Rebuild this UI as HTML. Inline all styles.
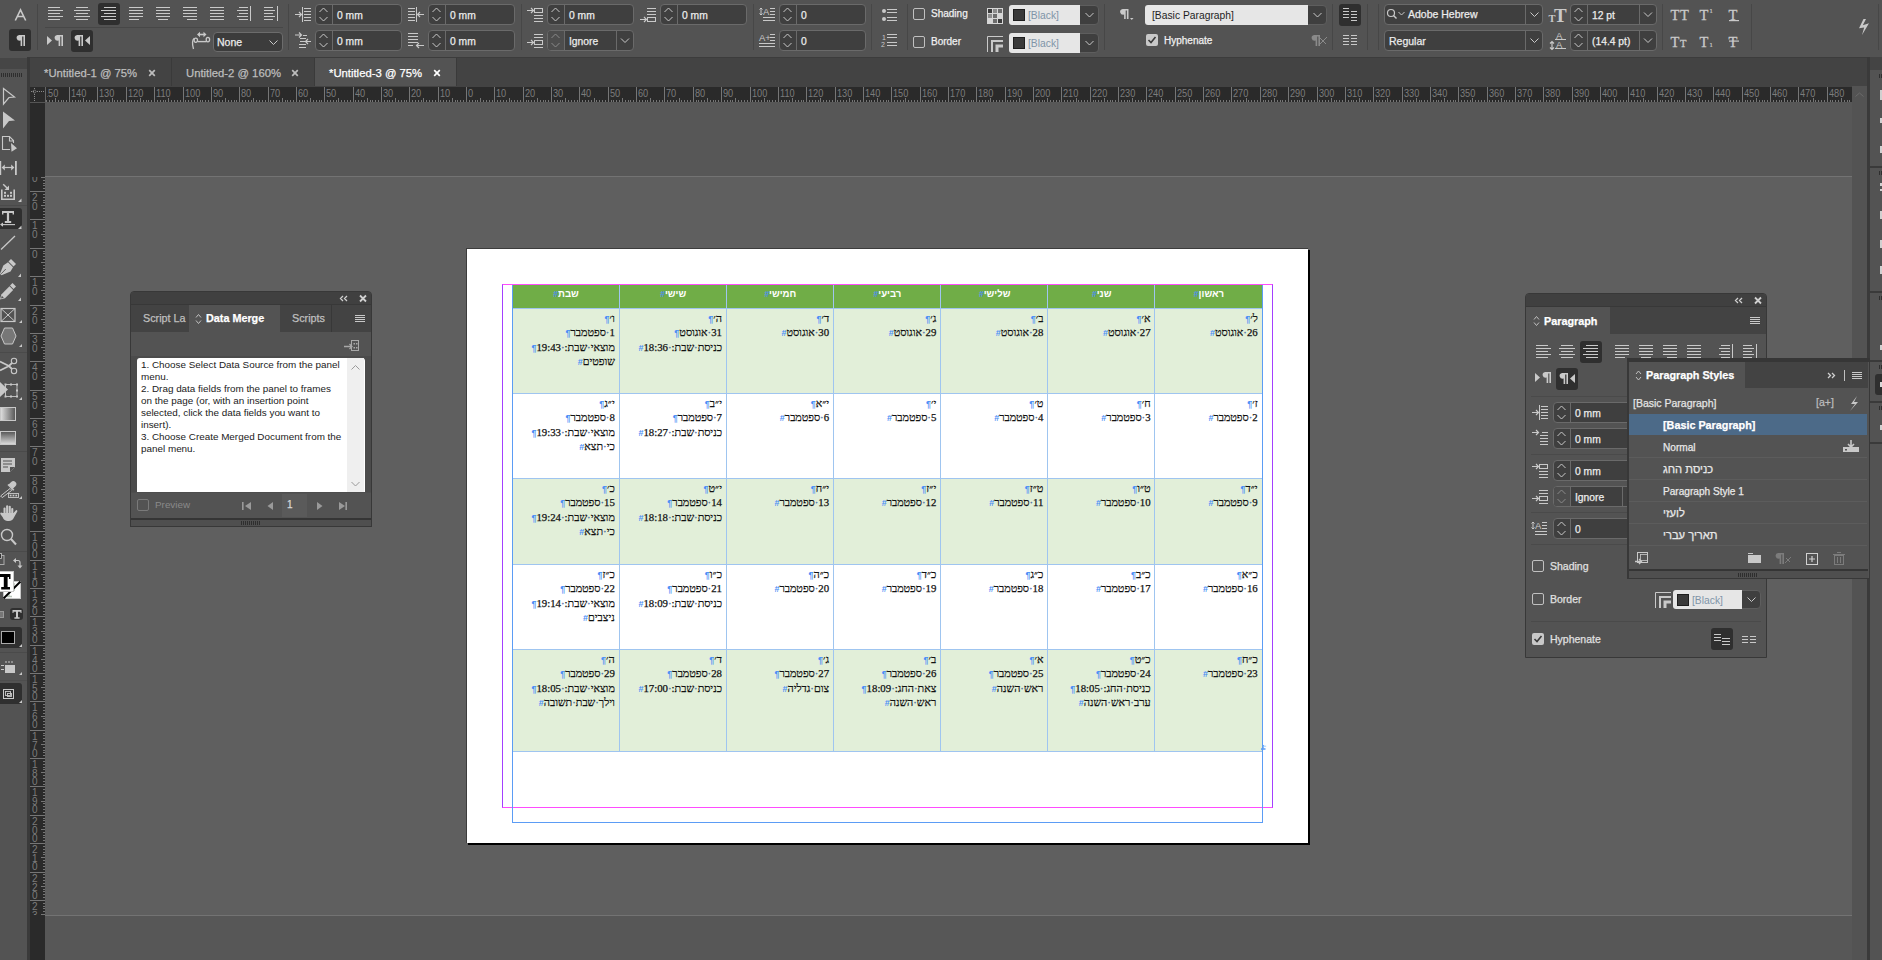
<!DOCTYPE html><html><head><meta charset="utf-8"><title>InDesign</title><style>
*{margin:0;padding:0;box-sizing:border-box}
html,body{width:1882px;height:960px;overflow:hidden;background:#535353;font-family:"Liberation Sans",sans-serif}
div{position:absolute}
.t{white-space:nowrap;-webkit-text-stroke-width:0.25px}
.r{white-space:nowrap}
svg{overflow:visible}
</style></head><body>
<div style="left:0px;top:0px;width:1882px;height:57px;background:#535353"></div>
<div style="left:0px;top:57px;width:1882px;height:1px;background:#3c3c3c"></div>
<svg style="position:absolute;left:0px;top:0px;" width="1" height="1" viewBox="0 0 1 1"><path d="M15.3,20.5 L20.5,9.8 L25.7,20.5 M17.5,16.5 h6" fill="none" stroke="#c9c9c9" stroke-width="1.6"/></svg>
<div style="left:9px;top:29px;width:22px;height:22px;background:#2f2f2f;border-radius:3px"></div>
<svg style="position:absolute;left:0px;top:0px;" width="1" height="1" viewBox="0 0 1 1"><path d="M19.2,35 h5.8 v11.0 h-1.6 v-9.6 h-1.2 v9.6 h-1.6 v-5.4 a3.2,2.8 0 0 1 -1.4,-5.6 z" fill="#c9c9c9"/></svg>
<div style="left:37px;top:4px;width:1px;height:46px;background:#474747"></div>
<div style="left:98px;top:3px;width:22px;height:22px;background:#2f2f2f;border-radius:3px"></div>
<svg style="position:absolute;left:0px;top:0px;" width="1" height="1" viewBox="0 0 1 1"><rect x="48" y="7" width="12" height="1" fill="#c9c9c9"/><rect x="48" y="10" width="15" height="1" fill="#c9c9c9"/><rect x="48" y="13" width="12" height="1" fill="#c9c9c9"/><rect x="48" y="16" width="15" height="1" fill="#c9c9c9"/><rect x="48" y="19" width="12" height="1" fill="#c9c9c9"/><rect x="76" y="7" width="12" height="1" fill="#c9c9c9"/><rect x="74" y="10" width="16" height="1" fill="#c9c9c9"/><rect x="76" y="13" width="12" height="1" fill="#c9c9c9"/><rect x="74" y="16" width="16" height="1" fill="#c9c9c9"/><rect x="76" y="19" width="12" height="1" fill="#c9c9c9"/><rect x="104" y="7" width="12" height="1" fill="#c9c9c9"/><rect x="101" y="10" width="15" height="1" fill="#c9c9c9"/><rect x="104" y="13" width="12" height="1" fill="#c9c9c9"/><rect x="101" y="16" width="15" height="1" fill="#c9c9c9"/><rect x="104" y="19" width="12" height="1" fill="#c9c9c9"/><rect x="129" y="7" width="14" height="1" fill="#c9c9c9"/><rect x="129" y="10" width="14" height="1" fill="#c9c9c9"/><rect x="129" y="13" width="14" height="1" fill="#c9c9c9"/><rect x="129" y="16" width="14" height="1" fill="#c9c9c9"/><rect x="129" y="19" width="10" height="1" fill="#c9c9c9"/><rect x="156" y="7" width="14" height="1" fill="#c9c9c9"/><rect x="156" y="10" width="14" height="1" fill="#c9c9c9"/><rect x="156" y="13" width="14" height="1" fill="#c9c9c9"/><rect x="156" y="16" width="14" height="1" fill="#c9c9c9"/><rect x="158" y="19" width="10" height="1" fill="#c9c9c9"/><rect x="183" y="7" width="14" height="1" fill="#c9c9c9"/><rect x="183" y="10" width="14" height="1" fill="#c9c9c9"/><rect x="183" y="13" width="14" height="1" fill="#c9c9c9"/><rect x="183" y="16" width="14" height="1" fill="#c9c9c9"/><rect x="187" y="19" width="10" height="1" fill="#c9c9c9"/><rect x="210" y="7" width="14" height="1" fill="#c9c9c9"/><rect x="210" y="10" width="14" height="1" fill="#c9c9c9"/><rect x="210" y="13" width="14" height="1" fill="#c9c9c9"/><rect x="210" y="16" width="14" height="1" fill="#c9c9c9"/><rect x="210" y="19" width="14" height="1" fill="#c9c9c9"/><rect x="239" y="7" width="9" height="1" fill="#c9c9c9"/><rect x="237" y="10" width="11" height="1" fill="#c9c9c9"/><rect x="239" y="13" width="9" height="1" fill="#c9c9c9"/><rect x="237" y="16" width="11" height="1" fill="#c9c9c9"/><rect x="239" y="19" width="9" height="1" fill="#c9c9c9"/><rect x="250" y="6" width="1" height="15" fill="#c9c9c9"/><rect x="264" y="7" width="9" height="1" fill="#c9c9c9"/><rect x="264" y="10" width="11" height="1" fill="#c9c9c9"/><rect x="264" y="13" width="9" height="1" fill="#c9c9c9"/><rect x="264" y="16" width="11" height="1" fill="#c9c9c9"/><rect x="264" y="19" width="9" height="1" fill="#c9c9c9"/><rect x="277" y="6" width="1" height="15" fill="#c9c9c9"/></svg>
<div style="left:45px;top:27px;width:238px;height:1px;background:#474747"></div>
<svg style="position:absolute;left:0px;top:0px;" width="1" height="1" viewBox="0 0 1 1"><path d="M47,36 L52,40.5 L47,45 z" fill="#c9c9c9"/><path d="M57.2,35 h5.8 v11.0 h-1.6 v-9.6 h-1.2 v9.6 h-1.6 v-5.4 a3.2,2.8 0 0 1 -1.4,-5.6 z" fill="#c9c9c9"/></svg>
<div style="left:71px;top:30px;width:22px;height:22px;background:#2f2f2f;border-radius:3px"></div>
<svg style="position:absolute;left:0px;top:0px;" width="1" height="1" viewBox="0 0 1 1"><path d="M77.2,35 h5.8 v11.0 h-1.6 v-9.6 h-1.2 v9.6 h-1.6 v-5.4 a3.2,2.8 0 0 1 -1.4,-5.6 z" fill="#c9c9c9"/><path d="M90,36 L85,40.5 L90,45 z" fill="#c9c9c9"/></svg>
<svg style="position:absolute;left:0px;top:0px;" width="1" height="1" viewBox="0 0 1 1"><path d="M198.5,34.5 H204.5" stroke="#c9c9c9" stroke-width="1.6"/><path d="M197,34.5 L200,31.8 L200,37.2 z M206.5,34.5 L203.5,31.8 L203.5,37.2 z" fill="#c9c9c9"/><ellipse cx="207.9" cy="39.6" rx="1.7" ry="2.2" fill="none" stroke="#c9c9c9" stroke-width="1.3"/><path d="M206.5,41.6 H198" stroke="#c9c9c9" stroke-width="1.4"/><ellipse cx="195.8" cy="40.2" rx="1.7" ry="2.1" fill="none" stroke="#c9c9c9" stroke-width="1.3"/><path d="M194.3,38.3 C192.2,40 192.2,44.5 193.5,49" stroke="#c9c9c9" stroke-width="1.3" fill="none"/></svg>
<div style="left:213px;top:32px;width:70px;height:20px;background:#3c3c3c;border:1px solid #6c6c6c;border-radius:4px"></div>
<div class="t" style="left:217px;top:35px;font-size:10.5px;line-height:15px;color:#ececec;">None</div>
<svg style="position:absolute;left:0px;top:0px;" width="1" height="1" viewBox="0 0 1 1"><polyline points="269.5,40.5 273.5,44.5 277.5,40.5" fill="none" stroke="#c9c9c9" stroke-width="1"/></svg>
<div style="left:288px;top:4px;width:1px;height:46px;background:#474747"></div>
<svg style="position:absolute;left:0px;top:0px;" width="1" height="1" viewBox="0 0 1 1"><path d="M295,14.5 h6 M299,12 l2.5,2.5 l-2.5,2.5" stroke="#c9c9c9" stroke-width="1.2" fill="none"/><rect x="302" y="7" width="1" height="15" fill="#c9c9c9"/><rect x="304" y="8" width="7" height="1" fill="#c9c9c9"/><rect x="304" y="11" width="7" height="1" fill="#c9c9c9"/><rect x="304" y="14" width="7" height="1" fill="#c9c9c9"/><rect x="304" y="17" width="7" height="1" fill="#c9c9c9"/><rect x="304" y="20" width="7" height="1" fill="#c9c9c9"/><rect x="408" y="8" width="7" height="1" fill="#c9c9c9"/><rect x="408" y="11" width="7" height="1" fill="#c9c9c9"/><rect x="408" y="14" width="7" height="1" fill="#c9c9c9"/><rect x="408" y="17" width="7" height="1" fill="#c9c9c9"/><rect x="408" y="20" width="7" height="1" fill="#c9c9c9"/><rect x="416" y="7" width="1" height="15" fill="#c9c9c9"/><path d="M424,14.5 h-6 M420,12 l-2.5,2.5 l2.5,2.5" stroke="#c9c9c9" stroke-width="1.2" fill="none"/><path d="M295,35 h6 M299,32.5 l2.5,2.5 l-2.5,2.5" stroke="#c9c9c9" stroke-width="1.2" fill="none"/><rect x="303" y="35" width="4" height="1" fill="#c9c9c9"/><rect x="300" y="38" width="6" height="1" fill="#c9c9c9"/><rect x="300" y="41" width="5" height="1" fill="#c9c9c9"/><rect x="299" y="44" width="7" height="1" fill="#c9c9c9"/><rect x="299" y="47" width="7" height="1" fill="#c9c9c9"/><path d="M311,41.5 h-5 M308,39 l-2.5,2.5 l2.5,2.5" stroke="#c9c9c9" stroke-width="1.2" fill="none"/><rect x="408" y="33" width="10" height="1" fill="#c9c9c9"/><rect x="408" y="36" width="10" height="1" fill="#c9c9c9"/><rect x="408" y="39" width="10" height="1" fill="#c9c9c9"/><rect x="408" y="42" width="10" height="1" fill="#c9c9c9"/><rect x="408" y="45" width="5" height="1" fill="#c9c9c9"/><path d="M424,45.5 h-7 M419,43 l-2.5,2.5 l2.5,2.5" stroke="#c9c9c9" stroke-width="1.2" fill="none"/><path d="M527,10.5 h6 M531,8 l2.5,2.5 l-2.5,2.5" stroke="#c9c9c9" stroke-width="1.2" fill="none"/><rect x="534.5" y="8.5" width="8" height="4" fill="none" stroke="#c9c9c9"/><rect x="534" y="15" width="9" height="1" fill="#c9c9c9"/><rect x="534" y="18" width="9" height="1" fill="#c9c9c9"/><rect x="534" y="21" width="9" height="1" fill="#c9c9c9"/><rect x="647" y="8" width="9" height="1" fill="#c9c9c9"/><rect x="647" y="11" width="9" height="1" fill="#c9c9c9"/><rect x="647" y="14" width="9" height="1" fill="#c9c9c9"/><path d="M640,19.5 h6 M644,17 l2.5,2.5 l-2.5,2.5" stroke="#c9c9c9" stroke-width="1.2" fill="none"/><rect x="647.5" y="17.5" width="8" height="4" fill="none" stroke="#c9c9c9"/><rect x="534" y="34" width="9" height="1" fill="#c9c9c9"/><rect x="534" y="37" width="9" height="1" fill="#c9c9c9"/><path d="M527,42.5 h6 M531,40 l2.5,2.5 l-2.5,2.5" stroke="#c9c9c9" stroke-width="1.2" fill="none"/><rect x="534.5" y="40.5" width="8" height="4" fill="none" stroke="#c9c9c9"/><rect x="534" y="47" width="9" height="1" fill="#c9c9c9"/></svg>
<div style="left:315px;top:4px;width:87px;height:21px;background:#3f3f3f;border:1px solid #6a6a6a;border-radius:4px"></div>
<div style="left:332px;top:5px;width:1px;height:19px;background:#6a6a6a"></div>
<svg style="position:absolute;left:0px;top:0px;" width="1" height="1" viewBox="0 0 1 1"><polyline points="319.5,12.0 323.5,8.0 327.5,12.0" fill="none" stroke="#c9c9c9" stroke-width="1"/><polyline points="319.5,17.0 323.5,21.0 327.5,17.0" fill="none" stroke="#c9c9c9" stroke-width="1"/></svg>
<div class="t" style="left:337px;top:8px;font-size:10.3px;line-height:15px;color:#ececec;">0 mm</div>
<div style="left:428px;top:4px;width:87px;height:21px;background:#3f3f3f;border:1px solid #6a6a6a;border-radius:4px"></div>
<div style="left:445px;top:5px;width:1px;height:19px;background:#6a6a6a"></div>
<svg style="position:absolute;left:0px;top:0px;" width="1" height="1" viewBox="0 0 1 1"><polyline points="432.5,12.0 436.5,8.0 440.5,12.0" fill="none" stroke="#c9c9c9" stroke-width="1"/><polyline points="432.5,17.0 436.5,21.0 440.5,17.0" fill="none" stroke="#c9c9c9" stroke-width="1"/></svg>
<div class="t" style="left:450px;top:8px;font-size:10.3px;line-height:15px;color:#ececec;">0 mm</div>
<div style="left:315px;top:30px;width:87px;height:21px;background:#3f3f3f;border:1px solid #6a6a6a;border-radius:4px"></div>
<div style="left:332px;top:31px;width:1px;height:19px;background:#6a6a6a"></div>
<svg style="position:absolute;left:0px;top:0px;" width="1" height="1" viewBox="0 0 1 1"><polyline points="319.5,38.0 323.5,34.0 327.5,38.0" fill="none" stroke="#c9c9c9" stroke-width="1"/><polyline points="319.5,43.0 323.5,47.0 327.5,43.0" fill="none" stroke="#c9c9c9" stroke-width="1"/></svg>
<div class="t" style="left:337px;top:34px;font-size:10.3px;line-height:15px;color:#ececec;">0 mm</div>
<div style="left:428px;top:30px;width:87px;height:21px;background:#3f3f3f;border:1px solid #6a6a6a;border-radius:4px"></div>
<div style="left:445px;top:31px;width:1px;height:19px;background:#6a6a6a"></div>
<svg style="position:absolute;left:0px;top:0px;" width="1" height="1" viewBox="0 0 1 1"><polyline points="432.5,38.0 436.5,34.0 440.5,38.0" fill="none" stroke="#c9c9c9" stroke-width="1"/><polyline points="432.5,43.0 436.5,47.0 440.5,43.0" fill="none" stroke="#c9c9c9" stroke-width="1"/></svg>
<div class="t" style="left:450px;top:34px;font-size:10.3px;line-height:15px;color:#ececec;">0 mm</div>
<div style="left:521px;top:4px;width:1px;height:46px;background:#474747"></div>
<div style="left:547px;top:4px;width:87px;height:21px;background:#3f3f3f;border:1px solid #6a6a6a;border-radius:4px"></div>
<div style="left:564px;top:5px;width:1px;height:19px;background:#6a6a6a"></div>
<svg style="position:absolute;left:0px;top:0px;" width="1" height="1" viewBox="0 0 1 1"><polyline points="551.5,12.0 555.5,8.0 559.5,12.0" fill="none" stroke="#c9c9c9" stroke-width="1"/><polyline points="551.5,17.0 555.5,21.0 559.5,17.0" fill="none" stroke="#c9c9c9" stroke-width="1"/></svg>
<div class="t" style="left:569px;top:8px;font-size:10.3px;line-height:15px;color:#ececec;">0 mm</div>
<div style="left:660px;top:4px;width:87px;height:21px;background:#3f3f3f;border:1px solid #6a6a6a;border-radius:4px"></div>
<div style="left:677px;top:5px;width:1px;height:19px;background:#6a6a6a"></div>
<svg style="position:absolute;left:0px;top:0px;" width="1" height="1" viewBox="0 0 1 1"><polyline points="664.5,12.0 668.5,8.0 672.5,12.0" fill="none" stroke="#c9c9c9" stroke-width="1"/><polyline points="664.5,17.0 668.5,21.0 672.5,17.0" fill="none" stroke="#c9c9c9" stroke-width="1"/></svg>
<div class="t" style="left:682px;top:8px;font-size:10.3px;line-height:15px;color:#ececec;">0 mm</div>
<div style="left:547px;top:30px;width:87px;height:21px;background:#3f3f3f;border:1px solid #6a6a6a;border-radius:4px"></div>
<div style="left:548px;top:31px;width:16px;height:19px;background:#4d4d4d;border-radius:3px 0 0 3px"></div>
<div style="left:564px;top:31px;width:1px;height:19px;background:#6a6a6a"></div>
<div style="left:616px;top:31px;width:1px;height:19px;background:#6a6a6a"></div>
<svg style="position:absolute;left:0px;top:0px;" width="1" height="1" viewBox="0 0 1 1"><polyline points="551.5,38.0 555.5,34.0 559.5,38.0" fill="none" stroke="#8a8a8a" stroke-width="1"/><polyline points="551.5,43.0 555.5,47.0 559.5,43.0" fill="none" stroke="#8a8a8a" stroke-width="1"/><polyline points="621.0,38.5 625.0,42.5 629.0,38.5" fill="none" stroke="#c9c9c9" stroke-width="1"/></svg>
<div class="t" style="left:569px;top:34px;font-size:10.3px;line-height:15px;color:#ececec;">Ignore</div>
<div style="left:753px;top:4px;width:1px;height:46px;background:#474747"></div>
<svg style="position:absolute;left:0px;top:0px;" width="1" height="1" viewBox="0 0 1 1"><path d="M761,8 v7 M759.5,9.5 l1.5,-1.5 l1.5,1.5 M759.5,13.5 l1.5,1.5 l1.5,-1.5" stroke="#c9c9c9" stroke-width="1" fill="none"/><text x="763" y="15" font-family="Liberation Sans" font-size="9.5" fill="#c9c9c9">A</text><rect x="770" y="8" width="5" height="1" fill="#c9c9c9"/><rect x="770" y="11" width="5" height="1" fill="#c9c9c9"/><rect x="770" y="14" width="5" height="1" fill="#c9c9c9"/><rect x="763" y="17" width="12" height="1" fill="#c9c9c9"/><rect x="763" y="20" width="12" height="1" fill="#c9c9c9"/><text x="759" y="41" font-family="Liberation Sans" font-size="9.5" fill="#c9c9c9">A+</text><rect x="770" y="34" width="5" height="1" fill="#c9c9c9"/><rect x="770" y="37" width="5" height="1" fill="#c9c9c9"/><rect x="770" y="40" width="5" height="1" fill="#c9c9c9"/><rect x="759" y="43" width="16" height="1" fill="#c9c9c9"/><rect x="759" y="46" width="16" height="1" fill="#c9c9c9"/><circle cx="884" cy="11" r="2" fill="#c9c9c9"/><circle cx="884" cy="19" r="2" fill="#c9c9c9"/><rect x="887" y="9" width="10" height="1" fill="#c9c9c9"/><rect x="887" y="12" width="10" height="1" fill="#c9c9c9"/><rect x="887" y="17" width="10" height="1" fill="#c9c9c9"/><rect x="887" y="20" width="10" height="1" fill="#c9c9c9"/><text x="882" y="40" font-family="Liberation Sans" font-size="7" fill="#c9c9c9">1</text><text x="881" y="47" font-family="Liberation Sans" font-size="7" fill="#c9c9c9">2</text><rect x="887" y="34" width="10" height="1" fill="#c9c9c9"/><rect x="887" y="37" width="10" height="1" fill="#c9c9c9"/><rect x="887" y="42" width="10" height="1" fill="#c9c9c9"/><rect x="887" y="45" width="10" height="1" fill="#c9c9c9"/></svg>
<div style="left:779px;top:4px;width:87px;height:21px;background:#3f3f3f;border:1px solid #6a6a6a;border-radius:4px"></div>
<div style="left:796px;top:5px;width:1px;height:19px;background:#6a6a6a"></div>
<svg style="position:absolute;left:0px;top:0px;" width="1" height="1" viewBox="0 0 1 1"><polyline points="783.5,12.0 787.5,8.0 791.5,12.0" fill="none" stroke="#c9c9c9" stroke-width="1"/><polyline points="783.5,17.0 787.5,21.0 791.5,17.0" fill="none" stroke="#c9c9c9" stroke-width="1"/></svg>
<div class="t" style="left:801px;top:8px;font-size:10.3px;line-height:15px;color:#ececec;">0</div>
<div style="left:779px;top:30px;width:87px;height:21px;background:#3f3f3f;border:1px solid #6a6a6a;border-radius:4px"></div>
<div style="left:796px;top:31px;width:1px;height:19px;background:#6a6a6a"></div>
<svg style="position:absolute;left:0px;top:0px;" width="1" height="1" viewBox="0 0 1 1"><polyline points="783.5,38.0 787.5,34.0 791.5,38.0" fill="none" stroke="#c9c9c9" stroke-width="1"/><polyline points="783.5,43.0 787.5,47.0 791.5,43.0" fill="none" stroke="#c9c9c9" stroke-width="1"/></svg>
<div class="t" style="left:801px;top:34px;font-size:10.3px;line-height:15px;color:#ececec;">0</div>
<div style="left:871px;top:4px;width:1px;height:46px;background:#474747"></div>
<div style="left:907px;top:4px;width:1px;height:46px;background:#474747"></div>
<div style="left:913px;top:8px;width:12px;height:12px;border:1px solid #c0c0c0;border-radius:2px"></div>
<div class="t" style="left:931px;top:6px;font-size:10px;line-height:16px;color:#f0f0f0;">Shading</div>
<div style="left:913px;top:36px;width:12px;height:12px;border:1px solid #c0c0c0;border-radius:2px"></div>
<div class="t" style="left:931px;top:34px;font-size:10px;line-height:16px;color:#f0f0f0;">Border</div>
<svg style="position:absolute;left:0px;top:0px;" width="1" height="1" viewBox="0 0 1 1"><rect x="987" y="8" width="16" height="16" fill="#d6d6d6"/><rect x="988" y="9" width="4" height="4" fill="#3c3c3c"/><rect x="993" y="9" width="4" height="4" fill="#8c8c8c"/><rect x="998" y="9" width="4" height="4" fill="#6c6c6c"/><rect x="988" y="14" width="4" height="4" fill="#8c8c8c"/><rect x="993" y="14" width="4" height="4" fill="#6c6c6c"/><rect x="998" y="14" width="4" height="4" fill="#d6d6d6"/><rect x="988" y="19" width="4" height="4" fill="#d6d6d6"/><rect x="993" y="19" width="4" height="4" fill="#6c6c6c"/><rect x="998" y="19" width="4" height="4" fill="#3c3c3c"/><path d="M987.5,52 V36.5 H1003" stroke="#c9c9c9" stroke-width="1" fill="none"/><path d="M992,52 V41 H1003" stroke="#c9c9c9" stroke-width="2" fill="none"/><path d="M997,52 V46 H1003" stroke="#c9c9c9" stroke-width="3" fill="none"/></svg>
<div style="left:1009px;top:5px;width:90px;height:20px;background:#3f3f3f;border:1px solid #5e5e5e;border-radius:4px"></div>
<div style="left:1009px;top:5px;width:71px;height:20px;background:#e6e6e6;border-radius:3px 0 0 3px"></div>
<svg style="position:absolute;left:0px;top:0px;" width="1" height="1" viewBox="0 0 1 1"><polyline points="1085.5,13.0 1089.5,17.0 1093.5,13.0" fill="none" stroke="#c9c9c9" stroke-width="1"/></svg>
<div style="left:1013px;top:9px;width:12px;height:12px;background:#3a3a3a;border:1px solid #1e1e1e"></div>
<div class="r" style="left:1028px;top:8px;font-size:10.3px;line-height:15px;color:#7f94a8;">[Black]</div>
<div style="left:1009px;top:33px;width:90px;height:20px;background:#3f3f3f;border:1px solid #5e5e5e;border-radius:4px"></div>
<div style="left:1009px;top:33px;width:71px;height:20px;background:#e6e6e6;border-radius:3px 0 0 3px"></div>
<svg style="position:absolute;left:0px;top:0px;" width="1" height="1" viewBox="0 0 1 1"><polyline points="1085.5,41.0 1089.5,45.0 1093.5,41.0" fill="none" stroke="#c9c9c9" stroke-width="1"/></svg>
<div style="left:1013px;top:37px;width:12px;height:12px;background:#3a3a3a;border:1px solid #1e1e1e"></div>
<div class="r" style="left:1028px;top:36px;font-size:10.3px;line-height:15px;color:#7f94a8;">[Black]</div>
<div style="left:1104px;top:4px;width:1px;height:46px;background:#474747"></div>
<svg style="position:absolute;left:0px;top:0px;" width="1" height="1" viewBox="0 0 1 1"><path d="M1122.7,9 h5.8 v9.9 h-1.6 v-8.5 h-1.2 v8.5 h-1.6 v-4.300000000000001 a3.2,2.8 0 0 1 -1.4,-5.6 z" fill="#c9c9c9"/><path d="M1130,18 h3.5 l-1.75,2 z" fill="#c9c9c9"/></svg>
<div style="left:1145px;top:5px;width:182px;height:20px;background:#3f3f3f;border:1px solid #5e5e5e;border-radius:4px"></div>
<div style="left:1145px;top:5px;width:163px;height:20px;background:#e6e6e6;border-radius:3px 0 0 3px"></div>
<svg style="position:absolute;left:0px;top:0px;" width="1" height="1" viewBox="0 0 1 1"><polyline points="1313.5,13.0 1317.5,17.0 1321.5,13.0" fill="none" stroke="#c9c9c9" stroke-width="1"/></svg>
<div class="r" style="left:1152px;top:8px;font-size:10.3px;line-height:15px;color:#1e1e1e;">[Basic Paragraph]</div>
<div style="left:1146px;top:34px;width:12px;height:12px;background:#c8c8c8;border-radius:2px"></div>
<svg style="position:absolute;left:0px;top:0px;" width="1" height="1" viewBox="0 0 1 1"><polyline points="1148.5,40 1151,42.5 1155.5,37" fill="none" stroke="#3a3a3a" stroke-width="1.6"/></svg>
<div class="t" style="left:1164px;top:33px;font-size:10px;line-height:16px;color:#f0f0f0;">Hyphenate</div>
<svg style="position:absolute;left:0px;top:0px;" width="1" height="1" viewBox="0 0 1 1"><path d="M1314.2,35 h5.8 v11.0 h-1.6 v-9.6 h-1.2 v9.6 h-1.6 v-5.4 a3.2,2.8 0 0 1 -1.4,-5.6 z" fill="#8a8a8a"/><path d="M1319,45 l8,-8 M1320,38 l6,6" stroke="#8a8a8a" stroke-width="1"/></svg>
<div style="left:1332px;top:4px;width:1px;height:46px;background:#474747"></div>
<div style="left:1339px;top:4px;width:22px;height:22px;background:#2f2f2f;border-radius:3px"></div>
<svg style="position:absolute;left:0px;top:0px;" width="1" height="1" viewBox="0 0 1 1"><rect x="1343" y="8" width="6" height="1" fill="#c9c9c9"/><rect x="1343" y="11" width="6" height="1" fill="#c9c9c9"/><rect x="1343" y="14" width="6" height="1" fill="#c9c9c9"/><rect x="1343" y="17" width="6" height="1" fill="#c9c9c9"/><rect x="1351" y="11" width="6" height="1" fill="#c9c9c9"/><rect x="1351" y="14" width="6" height="1" fill="#c9c9c9"/><rect x="1351" y="17" width="6" height="1" fill="#c9c9c9"/><rect x="1351" y="20" width="6" height="1" fill="#c9c9c9"/><rect x="1343" y="35" width="6" height="1" fill="#c9c9c9"/><rect x="1343" y="38" width="6" height="1" fill="#c9c9c9"/><rect x="1343" y="41" width="6" height="1" fill="#c9c9c9"/><rect x="1343" y="44" width="6" height="1" fill="#c9c9c9"/><rect x="1351" y="35" width="6" height="1" fill="#c9c9c9"/><rect x="1351" y="38" width="6" height="1" fill="#c9c9c9"/><rect x="1351" y="41" width="6" height="1" fill="#c9c9c9"/><rect x="1351" y="44" width="6" height="1" fill="#c9c9c9"/></svg>
<div style="left:1367px;top:4px;width:1px;height:46px;background:#474747"></div>
<div style="left:1378px;top:4px;width:1px;height:46px;background:#474747"></div>
<div style="left:1384px;top:4px;width:159px;height:21px;background:#3f3f3f;border:1px solid #6a6a6a;border-radius:4px"></div>
<div style="left:1525px;top:5px;width:1px;height:19px;background:#6a6a6a"></div>
<div style="left:1384px;top:30px;width:159px;height:21px;background:#3f3f3f;border:1px solid #6a6a6a;border-radius:4px"></div>
<div style="left:1525px;top:31px;width:1px;height:19px;background:#6a6a6a"></div>
<svg style="position:absolute;left:0px;top:0px;" width="1" height="1" viewBox="0 0 1 1"><circle cx="1391" cy="13" r="3.5" fill="none" stroke="#c9c9c9" stroke-width="1.2"/><path d="M1393.5,15.5 l3,3" stroke="#c9c9c9" stroke-width="1.4"/><polyline points="1398.5,12.0 1401.5,15.0 1404.5,12.0" fill="none" stroke="#c9c9c9" stroke-width="1"/><polyline points="1530.5,12.5 1534.5,16.5 1538.5,12.5" fill="none" stroke="#c9c9c9" stroke-width="1"/><polyline points="1530.5,38.5 1534.5,42.5 1538.5,38.5" fill="none" stroke="#c9c9c9" stroke-width="1"/></svg>
<div class="t" style="left:1408px;top:6px;font-size:10.5px;line-height:16px;color:#ececec;">Adobe Hebrew</div>
<div class="t" style="left:1389px;top:33px;font-size:10.5px;line-height:16px;color:#ececec;">Regular</div>
<svg style="position:absolute;left:0px;top:0px;" width="1" height="1" viewBox="0 0 1 1"><text x="1548.5" y="22" font-family="Liberation Serif" font-weight="bold" font-size="10.5" fill="#c9c9c9">T</text><text x="1554" y="22" font-family="Liberation Serif" font-weight="bold" font-size="19" fill="#c9c9c9">T</text><text x="1556" y="39" font-family="Liberation Sans" font-size="9.5" fill="#c9c9c9">A</text><text x="1556" y="48" font-family="Liberation Sans" font-size="9.5" fill="#c9c9c9">A</text><rect x="1555" y="39" width="11" height="1" fill="#c9c9c9"/><rect x="1555" y="48" width="11" height="1" fill="#c9c9c9"/><path d="M1552,41.5 v8 M1550,43.5 l2,-2 l2,2 M1550,47.5 l2,2 l2,-2" stroke="#c9c9c9" stroke-width="1.2" fill="none"/></svg>
<div style="left:1570px;top:4px;width:87px;height:21px;background:#3f3f3f;border:1px solid #6a6a6a;border-radius:4px"></div>
<div style="left:1587px;top:5px;width:1px;height:19px;background:#6a6a6a"></div>
<div style="left:1639px;top:5px;width:1px;height:19px;background:#6a6a6a"></div>
<svg style="position:absolute;left:0px;top:0px;" width="1" height="1" viewBox="0 0 1 1"><polyline points="1574.5,12.0 1578.5,8.0 1582.5,12.0" fill="none" stroke="#c9c9c9" stroke-width="1"/><polyline points="1574.5,17.0 1578.5,21.0 1582.5,17.0" fill="none" stroke="#c9c9c9" stroke-width="1"/><polyline points="1644.0,12.5 1648.0,16.5 1652.0,12.5" fill="none" stroke="#c9c9c9" stroke-width="1"/></svg>
<div class="t" style="left:1592px;top:8px;font-size:10.3px;line-height:15px;color:#ececec;">12 pt</div>
<div style="left:1570px;top:30px;width:87px;height:21px;background:#3f3f3f;border:1px solid #6a6a6a;border-radius:4px"></div>
<div style="left:1587px;top:31px;width:1px;height:19px;background:#6a6a6a"></div>
<div style="left:1639px;top:31px;width:1px;height:19px;background:#6a6a6a"></div>
<svg style="position:absolute;left:0px;top:0px;" width="1" height="1" viewBox="0 0 1 1"><polyline points="1574.5,38.0 1578.5,34.0 1582.5,38.0" fill="none" stroke="#c9c9c9" stroke-width="1"/><polyline points="1574.5,43.0 1578.5,47.0 1582.5,43.0" fill="none" stroke="#c9c9c9" stroke-width="1"/><polyline points="1644.0,38.5 1648.0,42.5 1652.0,38.5" fill="none" stroke="#c9c9c9" stroke-width="1"/></svg>
<div class="t" style="left:1592px;top:34px;font-size:10.3px;line-height:15px;color:#ececec;">(14.4 pt)</div>
<div style="left:1662px;top:4px;width:1px;height:46px;background:#474747"></div>
<svg style="position:absolute;left:0px;top:0px;" width="1" height="1" viewBox="0 0 1 1"><text x="1670.5" y="19.5" font-family="Liberation Serif" font-size="14.5" fill="#c9c9c9" stroke="#c9c9c9" stroke-width="0.3">T</text><text x="1680" y="19.5" font-family="Liberation Serif" font-size="14.5" fill="#c9c9c9" stroke="#c9c9c9" stroke-width="0.3">T</text><text x="1699.5" y="19.5" font-family="Liberation Serif" font-size="14.5" fill="#c9c9c9" stroke="#c9c9c9" stroke-width="0.3">T</text><text x="1709.5" y="13" font-family="Liberation Serif" font-size="6.5" fill="#c9c9c9" stroke="#c9c9c9" stroke-width="0.2">1</text><text x="1728.5" y="19.5" font-family="Liberation Serif" font-size="14.5" fill="#c9c9c9" stroke="#c9c9c9" stroke-width="0.3">T</text><rect x="1729" y="20" width="10" height="1.2" fill="#c9c9c9"/><text x="1670.5" y="46.5" font-family="Liberation Serif" font-size="14.5" fill="#c9c9c9" stroke="#c9c9c9" stroke-width="0.3">T</text><text x="1680" y="46.5" font-family="Liberation Serif" font-size="10.5" fill="#c9c9c9" stroke="#c9c9c9" stroke-width="0.3">T</text><text x="1699.5" y="46.5" font-family="Liberation Serif" font-size="14.5" fill="#c9c9c9" stroke="#c9c9c9" stroke-width="0.3">T</text><text x="1709.5" y="47" font-family="Liberation Serif" font-size="6.5" fill="#c9c9c9" stroke="#c9c9c9" stroke-width="0.2">1</text><text x="1728.5" y="46.5" font-family="Liberation Serif" font-size="14.5" fill="#c9c9c9" stroke="#c9c9c9" stroke-width="0.3">T</text><rect x="1729" y="40.5" width="10" height="1.2" fill="#c9c9c9"/><path d="M1863.5,19 L1866,19 L1862.8,25.2 L1869,23.3 L1862,35 L1864.2,27.6 L1859,28.2 z" fill="#c9c9c9"/></svg>
<div style="left:1751px;top:4px;width:1px;height:46px;background:#474747"></div>
<div style="left:1878px;top:4px;width:1px;height:46px;background:#474747"></div>
<div style="left:0px;top:57px;width:27px;height:903px;background:#535353"></div>
<div style="left:0px;top:58px;width:27px;height:11px;background:#464646"></div>
<div style="left:27px;top:57px;width:3px;height:903px;background:#3a3a3a"></div>
<div style="left:30px;top:58px;width:1837px;height:29px;background:#434343"></div>
<div style="left:171px;top:58px;width:1px;height:28px;background:#3a3a3a"></div>
<div style="left:314px;top:58px;width:1px;height:28px;background:#3a3a3a"></div>
<div style="left:315px;top:58px;width:141px;height:28px;background:#535353"></div>
<div style="left:456px;top:58px;width:1px;height:28px;background:#3a3a3a"></div>
<div class="t" style="left:44px;top:65px;font-size:11.3px;line-height:16px;color:#bdbdbd;">*Untitled-1 @ 75%</div>
<div class="t" style="left:186px;top:65px;font-size:11.3px;line-height:16px;color:#bdbdbd;">Untitled-2 @ 160%</div>
<div class="t" style="left:329px;top:65px;font-size:11.3px;line-height:16px;color:#ffffff;">*Untitled-3 @ 75%</div>
<svg style="position:absolute;left:0px;top:0px;" width="1" height="1" viewBox="0 0 1 1"><path d="M149.2,70.2 l5.6,5.6 M154.8,70.2 l-5.6,5.6" stroke="#bdbdbd" stroke-width="1.7"/><path d="M292.2,70.2 l5.6,5.6 M297.8,70.2 l-5.6,5.6" stroke="#bdbdbd" stroke-width="1.7"/><path d="M434.2,70.2 l5.6,5.6 M439.8,70.2 l-5.6,5.6" stroke="#ffffff" stroke-width="1.7"/></svg>
<div style="left:45px;top:102px;width:1807px;height:858px;background:#575757"></div>
<div style="left:45px;top:177px;width:1807px;height:738px;background:#5f5f5f"></div>
<div style="left:45px;top:176px;width:1807px;height:1px;background:#737373"></div>
<div style="left:45px;top:915px;width:1807px;height:1px;background:#737373"></div>
<div style="left:30px;top:87px;width:1822px;height:15px;background:#2a2a2a;overflow:hidden"></div>
<svg style="position:absolute;left:0px;top:0px;" width="1" height="1" viewBox="0 0 1 1"><rect x="46" y="100" width="1" height="2" fill="#767676"/><rect x="49" y="100" width="1" height="2" fill="#767676"/><rect x="52" y="100" width="1" height="2" fill="#767676"/><rect x="55" y="98" width="1" height="4" fill="#767676"/><rect x="58" y="100" width="1" height="2" fill="#767676"/><rect x="61" y="100" width="1" height="2" fill="#767676"/><rect x="63" y="100" width="1" height="2" fill="#767676"/><rect x="66" y="100" width="1" height="2" fill="#767676"/><rect x="69" y="87" width="1" height="15" fill="#767676"/><rect x="72" y="100" width="1" height="2" fill="#767676"/><rect x="75" y="100" width="1" height="2" fill="#767676"/><rect x="78" y="100" width="1" height="2" fill="#767676"/><rect x="80" y="100" width="1" height="2" fill="#767676"/><rect x="83" y="98" width="1" height="4" fill="#767676"/><rect x="86" y="100" width="1" height="2" fill="#767676"/><rect x="89" y="100" width="1" height="2" fill="#767676"/><rect x="92" y="100" width="1" height="2" fill="#767676"/><rect x="95" y="100" width="1" height="2" fill="#767676"/><rect x="97" y="87" width="1" height="15" fill="#767676"/><rect x="100" y="100" width="1" height="2" fill="#767676"/><rect x="103" y="100" width="1" height="2" fill="#767676"/><rect x="106" y="100" width="1" height="2" fill="#767676"/><rect x="109" y="100" width="1" height="2" fill="#767676"/><rect x="112" y="98" width="1" height="4" fill="#767676"/><rect x="114" y="100" width="1" height="2" fill="#767676"/><rect x="117" y="100" width="1" height="2" fill="#767676"/><rect x="120" y="100" width="1" height="2" fill="#767676"/><rect x="123" y="100" width="1" height="2" fill="#767676"/><rect x="126" y="87" width="1" height="15" fill="#767676"/><rect x="129" y="100" width="1" height="2" fill="#767676"/><rect x="131" y="100" width="1" height="2" fill="#767676"/><rect x="134" y="100" width="1" height="2" fill="#767676"/><rect x="137" y="100" width="1" height="2" fill="#767676"/><rect x="140" y="98" width="1" height="4" fill="#767676"/><rect x="143" y="100" width="1" height="2" fill="#767676"/><rect x="146" y="100" width="1" height="2" fill="#767676"/><rect x="148" y="100" width="1" height="2" fill="#767676"/><rect x="151" y="100" width="1" height="2" fill="#767676"/><rect x="154" y="87" width="1" height="15" fill="#767676"/><rect x="157" y="100" width="1" height="2" fill="#767676"/><rect x="160" y="100" width="1" height="2" fill="#767676"/><rect x="163" y="100" width="1" height="2" fill="#767676"/><rect x="165" y="100" width="1" height="2" fill="#767676"/><rect x="168" y="98" width="1" height="4" fill="#767676"/><rect x="171" y="100" width="1" height="2" fill="#767676"/><rect x="174" y="100" width="1" height="2" fill="#767676"/><rect x="177" y="100" width="1" height="2" fill="#767676"/><rect x="180" y="100" width="1" height="2" fill="#767676"/><rect x="183" y="87" width="1" height="15" fill="#767676"/><rect x="185" y="100" width="1" height="2" fill="#767676"/><rect x="188" y="100" width="1" height="2" fill="#767676"/><rect x="191" y="100" width="1" height="2" fill="#767676"/><rect x="194" y="100" width="1" height="2" fill="#767676"/><rect x="197" y="98" width="1" height="4" fill="#767676"/><rect x="200" y="100" width="1" height="2" fill="#767676"/><rect x="202" y="100" width="1" height="2" fill="#767676"/><rect x="205" y="100" width="1" height="2" fill="#767676"/><rect x="208" y="100" width="1" height="2" fill="#767676"/><rect x="211" y="87" width="1" height="15" fill="#767676"/><rect x="214" y="100" width="1" height="2" fill="#767676"/><rect x="217" y="100" width="1" height="2" fill="#767676"/><rect x="219" y="100" width="1" height="2" fill="#767676"/><rect x="222" y="100" width="1" height="2" fill="#767676"/><rect x="225" y="98" width="1" height="4" fill="#767676"/><rect x="228" y="100" width="1" height="2" fill="#767676"/><rect x="231" y="100" width="1" height="2" fill="#767676"/><rect x="234" y="100" width="1" height="2" fill="#767676"/><rect x="236" y="100" width="1" height="2" fill="#767676"/><rect x="239" y="87" width="1" height="15" fill="#767676"/><rect x="242" y="100" width="1" height="2" fill="#767676"/><rect x="245" y="100" width="1" height="2" fill="#767676"/><rect x="248" y="100" width="1" height="2" fill="#767676"/><rect x="251" y="100" width="1" height="2" fill="#767676"/><rect x="253" y="98" width="1" height="4" fill="#767676"/><rect x="256" y="100" width="1" height="2" fill="#767676"/><rect x="259" y="100" width="1" height="2" fill="#767676"/><rect x="262" y="100" width="1" height="2" fill="#767676"/><rect x="265" y="100" width="1" height="2" fill="#767676"/><rect x="268" y="87" width="1" height="15" fill="#767676"/><rect x="270" y="100" width="1" height="2" fill="#767676"/><rect x="273" y="100" width="1" height="2" fill="#767676"/><rect x="276" y="100" width="1" height="2" fill="#767676"/><rect x="279" y="100" width="1" height="2" fill="#767676"/><rect x="282" y="98" width="1" height="4" fill="#767676"/><rect x="285" y="100" width="1" height="2" fill="#767676"/><rect x="287" y="100" width="1" height="2" fill="#767676"/><rect x="290" y="100" width="1" height="2" fill="#767676"/><rect x="293" y="100" width="1" height="2" fill="#767676"/><rect x="296" y="87" width="1" height="15" fill="#767676"/><rect x="299" y="100" width="1" height="2" fill="#767676"/><rect x="302" y="100" width="1" height="2" fill="#767676"/><rect x="304" y="100" width="1" height="2" fill="#767676"/><rect x="307" y="100" width="1" height="2" fill="#767676"/><rect x="310" y="98" width="1" height="4" fill="#767676"/><rect x="313" y="100" width="1" height="2" fill="#767676"/><rect x="316" y="100" width="1" height="2" fill="#767676"/><rect x="319" y="100" width="1" height="2" fill="#767676"/><rect x="321" y="100" width="1" height="2" fill="#767676"/><rect x="324" y="87" width="1" height="15" fill="#767676"/><rect x="327" y="100" width="1" height="2" fill="#767676"/><rect x="330" y="100" width="1" height="2" fill="#767676"/><rect x="333" y="100" width="1" height="2" fill="#767676"/><rect x="336" y="100" width="1" height="2" fill="#767676"/><rect x="338" y="98" width="1" height="4" fill="#767676"/><rect x="341" y="100" width="1" height="2" fill="#767676"/><rect x="344" y="100" width="1" height="2" fill="#767676"/><rect x="347" y="100" width="1" height="2" fill="#767676"/><rect x="350" y="100" width="1" height="2" fill="#767676"/><rect x="353" y="87" width="1" height="15" fill="#767676"/><rect x="355" y="100" width="1" height="2" fill="#767676"/><rect x="358" y="100" width="1" height="2" fill="#767676"/><rect x="361" y="100" width="1" height="2" fill="#767676"/><rect x="364" y="100" width="1" height="2" fill="#767676"/><rect x="367" y="98" width="1" height="4" fill="#767676"/><rect x="370" y="100" width="1" height="2" fill="#767676"/><rect x="372" y="100" width="1" height="2" fill="#767676"/><rect x="375" y="100" width="1" height="2" fill="#767676"/><rect x="378" y="100" width="1" height="2" fill="#767676"/><rect x="381" y="87" width="1" height="15" fill="#767676"/><rect x="384" y="100" width="1" height="2" fill="#767676"/><rect x="387" y="100" width="1" height="2" fill="#767676"/><rect x="389" y="100" width="1" height="2" fill="#767676"/><rect x="392" y="100" width="1" height="2" fill="#767676"/><rect x="395" y="98" width="1" height="4" fill="#767676"/><rect x="398" y="100" width="1" height="2" fill="#767676"/><rect x="401" y="100" width="1" height="2" fill="#767676"/><rect x="404" y="100" width="1" height="2" fill="#767676"/><rect x="406" y="100" width="1" height="2" fill="#767676"/><rect x="409" y="87" width="1" height="15" fill="#767676"/><rect x="412" y="100" width="1" height="2" fill="#767676"/><rect x="415" y="100" width="1" height="2" fill="#767676"/><rect x="418" y="100" width="1" height="2" fill="#767676"/><rect x="421" y="100" width="1" height="2" fill="#767676"/><rect x="423" y="98" width="1" height="4" fill="#767676"/><rect x="426" y="100" width="1" height="2" fill="#767676"/><rect x="429" y="100" width="1" height="2" fill="#767676"/><rect x="432" y="100" width="1" height="2" fill="#767676"/><rect x="435" y="100" width="1" height="2" fill="#767676"/><rect x="438" y="87" width="1" height="15" fill="#767676"/><rect x="440" y="100" width="1" height="2" fill="#767676"/><rect x="443" y="100" width="1" height="2" fill="#767676"/><rect x="446" y="100" width="1" height="2" fill="#767676"/><rect x="449" y="100" width="1" height="2" fill="#767676"/><rect x="452" y="98" width="1" height="4" fill="#767676"/><rect x="455" y="100" width="1" height="2" fill="#767676"/><rect x="457" y="100" width="1" height="2" fill="#767676"/><rect x="460" y="100" width="1" height="2" fill="#767676"/><rect x="463" y="100" width="1" height="2" fill="#767676"/><rect x="466" y="87" width="1" height="15" fill="#767676"/><rect x="469" y="100" width="1" height="2" fill="#767676"/><rect x="472" y="100" width="1" height="2" fill="#767676"/><rect x="475" y="100" width="1" height="2" fill="#767676"/><rect x="477" y="100" width="1" height="2" fill="#767676"/><rect x="480" y="98" width="1" height="4" fill="#767676"/><rect x="483" y="100" width="1" height="2" fill="#767676"/><rect x="486" y="100" width="1" height="2" fill="#767676"/><rect x="489" y="100" width="1" height="2" fill="#767676"/><rect x="492" y="100" width="1" height="2" fill="#767676"/><rect x="494" y="87" width="1" height="15" fill="#767676"/><rect x="497" y="100" width="1" height="2" fill="#767676"/><rect x="500" y="100" width="1" height="2" fill="#767676"/><rect x="503" y="100" width="1" height="2" fill="#767676"/><rect x="506" y="100" width="1" height="2" fill="#767676"/><rect x="509" y="98" width="1" height="4" fill="#767676"/><rect x="511" y="100" width="1" height="2" fill="#767676"/><rect x="514" y="100" width="1" height="2" fill="#767676"/><rect x="517" y="100" width="1" height="2" fill="#767676"/><rect x="520" y="100" width="1" height="2" fill="#767676"/><rect x="523" y="87" width="1" height="15" fill="#767676"/><rect x="526" y="100" width="1" height="2" fill="#767676"/><rect x="528" y="100" width="1" height="2" fill="#767676"/><rect x="531" y="100" width="1" height="2" fill="#767676"/><rect x="534" y="100" width="1" height="2" fill="#767676"/><rect x="537" y="98" width="1" height="4" fill="#767676"/><rect x="540" y="100" width="1" height="2" fill="#767676"/><rect x="543" y="100" width="1" height="2" fill="#767676"/><rect x="545" y="100" width="1" height="2" fill="#767676"/><rect x="548" y="100" width="1" height="2" fill="#767676"/><rect x="551" y="87" width="1" height="15" fill="#767676"/><rect x="554" y="100" width="1" height="2" fill="#767676"/><rect x="557" y="100" width="1" height="2" fill="#767676"/><rect x="560" y="100" width="1" height="2" fill="#767676"/><rect x="562" y="100" width="1" height="2" fill="#767676"/><rect x="565" y="98" width="1" height="4" fill="#767676"/><rect x="568" y="100" width="1" height="2" fill="#767676"/><rect x="571" y="100" width="1" height="2" fill="#767676"/><rect x="574" y="100" width="1" height="2" fill="#767676"/><rect x="577" y="100" width="1" height="2" fill="#767676"/><rect x="579" y="87" width="1" height="15" fill="#767676"/><rect x="582" y="100" width="1" height="2" fill="#767676"/><rect x="585" y="100" width="1" height="2" fill="#767676"/><rect x="588" y="100" width="1" height="2" fill="#767676"/><rect x="591" y="100" width="1" height="2" fill="#767676"/><rect x="594" y="98" width="1" height="4" fill="#767676"/><rect x="596" y="100" width="1" height="2" fill="#767676"/><rect x="599" y="100" width="1" height="2" fill="#767676"/><rect x="602" y="100" width="1" height="2" fill="#767676"/><rect x="605" y="100" width="1" height="2" fill="#767676"/><rect x="608" y="87" width="1" height="15" fill="#767676"/><rect x="611" y="100" width="1" height="2" fill="#767676"/><rect x="613" y="100" width="1" height="2" fill="#767676"/><rect x="616" y="100" width="1" height="2" fill="#767676"/><rect x="619" y="100" width="1" height="2" fill="#767676"/><rect x="622" y="98" width="1" height="4" fill="#767676"/><rect x="625" y="100" width="1" height="2" fill="#767676"/><rect x="628" y="100" width="1" height="2" fill="#767676"/><rect x="630" y="100" width="1" height="2" fill="#767676"/><rect x="633" y="100" width="1" height="2" fill="#767676"/><rect x="636" y="87" width="1" height="15" fill="#767676"/><rect x="639" y="100" width="1" height="2" fill="#767676"/><rect x="642" y="100" width="1" height="2" fill="#767676"/><rect x="645" y="100" width="1" height="2" fill="#767676"/><rect x="647" y="100" width="1" height="2" fill="#767676"/><rect x="650" y="98" width="1" height="4" fill="#767676"/><rect x="653" y="100" width="1" height="2" fill="#767676"/><rect x="656" y="100" width="1" height="2" fill="#767676"/><rect x="659" y="100" width="1" height="2" fill="#767676"/><rect x="662" y="100" width="1" height="2" fill="#767676"/><rect x="664" y="87" width="1" height="15" fill="#767676"/><rect x="667" y="100" width="1" height="2" fill="#767676"/><rect x="670" y="100" width="1" height="2" fill="#767676"/><rect x="673" y="100" width="1" height="2" fill="#767676"/><rect x="676" y="100" width="1" height="2" fill="#767676"/><rect x="679" y="98" width="1" height="4" fill="#767676"/><rect x="681" y="100" width="1" height="2" fill="#767676"/><rect x="684" y="100" width="1" height="2" fill="#767676"/><rect x="687" y="100" width="1" height="2" fill="#767676"/><rect x="690" y="100" width="1" height="2" fill="#767676"/><rect x="693" y="87" width="1" height="15" fill="#767676"/><rect x="696" y="100" width="1" height="2" fill="#767676"/><rect x="698" y="100" width="1" height="2" fill="#767676"/><rect x="701" y="100" width="1" height="2" fill="#767676"/><rect x="704" y="100" width="1" height="2" fill="#767676"/><rect x="707" y="98" width="1" height="4" fill="#767676"/><rect x="710" y="100" width="1" height="2" fill="#767676"/><rect x="713" y="100" width="1" height="2" fill="#767676"/><rect x="715" y="100" width="1" height="2" fill="#767676"/><rect x="718" y="100" width="1" height="2" fill="#767676"/><rect x="721" y="87" width="1" height="15" fill="#767676"/><rect x="724" y="100" width="1" height="2" fill="#767676"/><rect x="727" y="100" width="1" height="2" fill="#767676"/><rect x="730" y="100" width="1" height="2" fill="#767676"/><rect x="732" y="100" width="1" height="2" fill="#767676"/><rect x="735" y="98" width="1" height="4" fill="#767676"/><rect x="738" y="100" width="1" height="2" fill="#767676"/><rect x="741" y="100" width="1" height="2" fill="#767676"/><rect x="744" y="100" width="1" height="2" fill="#767676"/><rect x="747" y="100" width="1" height="2" fill="#767676"/><rect x="750" y="87" width="1" height="15" fill="#767676"/><rect x="752" y="100" width="1" height="2" fill="#767676"/><rect x="755" y="100" width="1" height="2" fill="#767676"/><rect x="758" y="100" width="1" height="2" fill="#767676"/><rect x="761" y="100" width="1" height="2" fill="#767676"/><rect x="764" y="98" width="1" height="4" fill="#767676"/><rect x="767" y="100" width="1" height="2" fill="#767676"/><rect x="769" y="100" width="1" height="2" fill="#767676"/><rect x="772" y="100" width="1" height="2" fill="#767676"/><rect x="775" y="100" width="1" height="2" fill="#767676"/><rect x="778" y="87" width="1" height="15" fill="#767676"/><rect x="781" y="100" width="1" height="2" fill="#767676"/><rect x="784" y="100" width="1" height="2" fill="#767676"/><rect x="786" y="100" width="1" height="2" fill="#767676"/><rect x="789" y="100" width="1" height="2" fill="#767676"/><rect x="792" y="98" width="1" height="4" fill="#767676"/><rect x="795" y="100" width="1" height="2" fill="#767676"/><rect x="798" y="100" width="1" height="2" fill="#767676"/><rect x="801" y="100" width="1" height="2" fill="#767676"/><rect x="803" y="100" width="1" height="2" fill="#767676"/><rect x="806" y="87" width="1" height="15" fill="#767676"/><rect x="809" y="100" width="1" height="2" fill="#767676"/><rect x="812" y="100" width="1" height="2" fill="#767676"/><rect x="815" y="100" width="1" height="2" fill="#767676"/><rect x="818" y="100" width="1" height="2" fill="#767676"/><rect x="820" y="98" width="1" height="4" fill="#767676"/><rect x="823" y="100" width="1" height="2" fill="#767676"/><rect x="826" y="100" width="1" height="2" fill="#767676"/><rect x="829" y="100" width="1" height="2" fill="#767676"/><rect x="832" y="100" width="1" height="2" fill="#767676"/><rect x="835" y="87" width="1" height="15" fill="#767676"/><rect x="837" y="100" width="1" height="2" fill="#767676"/><rect x="840" y="100" width="1" height="2" fill="#767676"/><rect x="843" y="100" width="1" height="2" fill="#767676"/><rect x="846" y="100" width="1" height="2" fill="#767676"/><rect x="849" y="98" width="1" height="4" fill="#767676"/><rect x="852" y="100" width="1" height="2" fill="#767676"/><rect x="854" y="100" width="1" height="2" fill="#767676"/><rect x="857" y="100" width="1" height="2" fill="#767676"/><rect x="860" y="100" width="1" height="2" fill="#767676"/><rect x="863" y="87" width="1" height="15" fill="#767676"/><rect x="866" y="100" width="1" height="2" fill="#767676"/><rect x="869" y="100" width="1" height="2" fill="#767676"/><rect x="871" y="100" width="1" height="2" fill="#767676"/><rect x="874" y="100" width="1" height="2" fill="#767676"/><rect x="877" y="98" width="1" height="4" fill="#767676"/><rect x="880" y="100" width="1" height="2" fill="#767676"/><rect x="883" y="100" width="1" height="2" fill="#767676"/><rect x="886" y="100" width="1" height="2" fill="#767676"/><rect x="888" y="100" width="1" height="2" fill="#767676"/><rect x="891" y="87" width="1" height="15" fill="#767676"/><rect x="894" y="100" width="1" height="2" fill="#767676"/><rect x="897" y="100" width="1" height="2" fill="#767676"/><rect x="900" y="100" width="1" height="2" fill="#767676"/><rect x="903" y="100" width="1" height="2" fill="#767676"/><rect x="905" y="98" width="1" height="4" fill="#767676"/><rect x="908" y="100" width="1" height="2" fill="#767676"/><rect x="911" y="100" width="1" height="2" fill="#767676"/><rect x="914" y="100" width="1" height="2" fill="#767676"/><rect x="917" y="100" width="1" height="2" fill="#767676"/><rect x="920" y="87" width="1" height="15" fill="#767676"/><rect x="922" y="100" width="1" height="2" fill="#767676"/><rect x="925" y="100" width="1" height="2" fill="#767676"/><rect x="928" y="100" width="1" height="2" fill="#767676"/><rect x="931" y="100" width="1" height="2" fill="#767676"/><rect x="934" y="98" width="1" height="4" fill="#767676"/><rect x="937" y="100" width="1" height="2" fill="#767676"/><rect x="939" y="100" width="1" height="2" fill="#767676"/><rect x="942" y="100" width="1" height="2" fill="#767676"/><rect x="945" y="100" width="1" height="2" fill="#767676"/><rect x="948" y="87" width="1" height="15" fill="#767676"/><rect x="951" y="100" width="1" height="2" fill="#767676"/><rect x="954" y="100" width="1" height="2" fill="#767676"/><rect x="956" y="100" width="1" height="2" fill="#767676"/><rect x="959" y="100" width="1" height="2" fill="#767676"/><rect x="962" y="98" width="1" height="4" fill="#767676"/><rect x="965" y="100" width="1" height="2" fill="#767676"/><rect x="968" y="100" width="1" height="2" fill="#767676"/><rect x="971" y="100" width="1" height="2" fill="#767676"/><rect x="973" y="100" width="1" height="2" fill="#767676"/><rect x="976" y="87" width="1" height="15" fill="#767676"/><rect x="979" y="100" width="1" height="2" fill="#767676"/><rect x="982" y="100" width="1" height="2" fill="#767676"/><rect x="985" y="100" width="1" height="2" fill="#767676"/><rect x="988" y="100" width="1" height="2" fill="#767676"/><rect x="990" y="98" width="1" height="4" fill="#767676"/><rect x="993" y="100" width="1" height="2" fill="#767676"/><rect x="996" y="100" width="1" height="2" fill="#767676"/><rect x="999" y="100" width="1" height="2" fill="#767676"/><rect x="1002" y="100" width="1" height="2" fill="#767676"/><rect x="1005" y="87" width="1" height="15" fill="#767676"/><rect x="1007" y="100" width="1" height="2" fill="#767676"/><rect x="1010" y="100" width="1" height="2" fill="#767676"/><rect x="1013" y="100" width="1" height="2" fill="#767676"/><rect x="1016" y="100" width="1" height="2" fill="#767676"/><rect x="1019" y="98" width="1" height="4" fill="#767676"/><rect x="1022" y="100" width="1" height="2" fill="#767676"/><rect x="1024" y="100" width="1" height="2" fill="#767676"/><rect x="1027" y="100" width="1" height="2" fill="#767676"/><rect x="1030" y="100" width="1" height="2" fill="#767676"/><rect x="1033" y="87" width="1" height="15" fill="#767676"/><rect x="1036" y="100" width="1" height="2" fill="#767676"/><rect x="1039" y="100" width="1" height="2" fill="#767676"/><rect x="1042" y="100" width="1" height="2" fill="#767676"/><rect x="1044" y="100" width="1" height="2" fill="#767676"/><rect x="1047" y="98" width="1" height="4" fill="#767676"/><rect x="1050" y="100" width="1" height="2" fill="#767676"/><rect x="1053" y="100" width="1" height="2" fill="#767676"/><rect x="1056" y="100" width="1" height="2" fill="#767676"/><rect x="1059" y="100" width="1" height="2" fill="#767676"/><rect x="1061" y="87" width="1" height="15" fill="#767676"/><rect x="1064" y="100" width="1" height="2" fill="#767676"/><rect x="1067" y="100" width="1" height="2" fill="#767676"/><rect x="1070" y="100" width="1" height="2" fill="#767676"/><rect x="1073" y="100" width="1" height="2" fill="#767676"/><rect x="1076" y="98" width="1" height="4" fill="#767676"/><rect x="1078" y="100" width="1" height="2" fill="#767676"/><rect x="1081" y="100" width="1" height="2" fill="#767676"/><rect x="1084" y="100" width="1" height="2" fill="#767676"/><rect x="1087" y="100" width="1" height="2" fill="#767676"/><rect x="1090" y="87" width="1" height="15" fill="#767676"/><rect x="1093" y="100" width="1" height="2" fill="#767676"/><rect x="1095" y="100" width="1" height="2" fill="#767676"/><rect x="1098" y="100" width="1" height="2" fill="#767676"/><rect x="1101" y="100" width="1" height="2" fill="#767676"/><rect x="1104" y="98" width="1" height="4" fill="#767676"/><rect x="1107" y="100" width="1" height="2" fill="#767676"/><rect x="1110" y="100" width="1" height="2" fill="#767676"/><rect x="1112" y="100" width="1" height="2" fill="#767676"/><rect x="1115" y="100" width="1" height="2" fill="#767676"/><rect x="1118" y="87" width="1" height="15" fill="#767676"/><rect x="1121" y="100" width="1" height="2" fill="#767676"/><rect x="1124" y="100" width="1" height="2" fill="#767676"/><rect x="1127" y="100" width="1" height="2" fill="#767676"/><rect x="1129" y="100" width="1" height="2" fill="#767676"/><rect x="1132" y="98" width="1" height="4" fill="#767676"/><rect x="1135" y="100" width="1" height="2" fill="#767676"/><rect x="1138" y="100" width="1" height="2" fill="#767676"/><rect x="1141" y="100" width="1" height="2" fill="#767676"/><rect x="1144" y="100" width="1" height="2" fill="#767676"/><rect x="1146" y="87" width="1" height="15" fill="#767676"/><rect x="1149" y="100" width="1" height="2" fill="#767676"/><rect x="1152" y="100" width="1" height="2" fill="#767676"/><rect x="1155" y="100" width="1" height="2" fill="#767676"/><rect x="1158" y="100" width="1" height="2" fill="#767676"/><rect x="1161" y="98" width="1" height="4" fill="#767676"/><rect x="1163" y="100" width="1" height="2" fill="#767676"/><rect x="1166" y="100" width="1" height="2" fill="#767676"/><rect x="1169" y="100" width="1" height="2" fill="#767676"/><rect x="1172" y="100" width="1" height="2" fill="#767676"/><rect x="1175" y="87" width="1" height="15" fill="#767676"/><rect x="1178" y="100" width="1" height="2" fill="#767676"/><rect x="1180" y="100" width="1" height="2" fill="#767676"/><rect x="1183" y="100" width="1" height="2" fill="#767676"/><rect x="1186" y="100" width="1" height="2" fill="#767676"/><rect x="1189" y="98" width="1" height="4" fill="#767676"/><rect x="1192" y="100" width="1" height="2" fill="#767676"/><rect x="1195" y="100" width="1" height="2" fill="#767676"/><rect x="1197" y="100" width="1" height="2" fill="#767676"/><rect x="1200" y="100" width="1" height="2" fill="#767676"/><rect x="1203" y="87" width="1" height="15" fill="#767676"/><rect x="1206" y="100" width="1" height="2" fill="#767676"/><rect x="1209" y="100" width="1" height="2" fill="#767676"/><rect x="1212" y="100" width="1" height="2" fill="#767676"/><rect x="1214" y="100" width="1" height="2" fill="#767676"/><rect x="1217" y="98" width="1" height="4" fill="#767676"/><rect x="1220" y="100" width="1" height="2" fill="#767676"/><rect x="1223" y="100" width="1" height="2" fill="#767676"/><rect x="1226" y="100" width="1" height="2" fill="#767676"/><rect x="1229" y="100" width="1" height="2" fill="#767676"/><rect x="1231" y="87" width="1" height="15" fill="#767676"/><rect x="1234" y="100" width="1" height="2" fill="#767676"/><rect x="1237" y="100" width="1" height="2" fill="#767676"/><rect x="1240" y="100" width="1" height="2" fill="#767676"/><rect x="1243" y="100" width="1" height="2" fill="#767676"/><rect x="1246" y="98" width="1" height="4" fill="#767676"/><rect x="1248" y="100" width="1" height="2" fill="#767676"/><rect x="1251" y="100" width="1" height="2" fill="#767676"/><rect x="1254" y="100" width="1" height="2" fill="#767676"/><rect x="1257" y="100" width="1" height="2" fill="#767676"/><rect x="1260" y="87" width="1" height="15" fill="#767676"/><rect x="1263" y="100" width="1" height="2" fill="#767676"/><rect x="1265" y="100" width="1" height="2" fill="#767676"/><rect x="1268" y="100" width="1" height="2" fill="#767676"/><rect x="1271" y="100" width="1" height="2" fill="#767676"/><rect x="1274" y="98" width="1" height="4" fill="#767676"/><rect x="1277" y="100" width="1" height="2" fill="#767676"/><rect x="1280" y="100" width="1" height="2" fill="#767676"/><rect x="1282" y="100" width="1" height="2" fill="#767676"/><rect x="1285" y="100" width="1" height="2" fill="#767676"/><rect x="1288" y="87" width="1" height="15" fill="#767676"/><rect x="1291" y="100" width="1" height="2" fill="#767676"/><rect x="1294" y="100" width="1" height="2" fill="#767676"/><rect x="1297" y="100" width="1" height="2" fill="#767676"/><rect x="1299" y="100" width="1" height="2" fill="#767676"/><rect x="1302" y="98" width="1" height="4" fill="#767676"/><rect x="1305" y="100" width="1" height="2" fill="#767676"/><rect x="1308" y="100" width="1" height="2" fill="#767676"/><rect x="1311" y="100" width="1" height="2" fill="#767676"/><rect x="1314" y="100" width="1" height="2" fill="#767676"/><rect x="1317" y="87" width="1" height="15" fill="#767676"/><rect x="1319" y="100" width="1" height="2" fill="#767676"/><rect x="1322" y="100" width="1" height="2" fill="#767676"/><rect x="1325" y="100" width="1" height="2" fill="#767676"/><rect x="1328" y="100" width="1" height="2" fill="#767676"/><rect x="1331" y="98" width="1" height="4" fill="#767676"/><rect x="1334" y="100" width="1" height="2" fill="#767676"/><rect x="1336" y="100" width="1" height="2" fill="#767676"/><rect x="1339" y="100" width="1" height="2" fill="#767676"/><rect x="1342" y="100" width="1" height="2" fill="#767676"/><rect x="1345" y="87" width="1" height="15" fill="#767676"/><rect x="1348" y="100" width="1" height="2" fill="#767676"/><rect x="1351" y="100" width="1" height="2" fill="#767676"/><rect x="1353" y="100" width="1" height="2" fill="#767676"/><rect x="1356" y="100" width="1" height="2" fill="#767676"/><rect x="1359" y="98" width="1" height="4" fill="#767676"/><rect x="1362" y="100" width="1" height="2" fill="#767676"/><rect x="1365" y="100" width="1" height="2" fill="#767676"/><rect x="1368" y="100" width="1" height="2" fill="#767676"/><rect x="1370" y="100" width="1" height="2" fill="#767676"/><rect x="1373" y="87" width="1" height="15" fill="#767676"/><rect x="1376" y="100" width="1" height="2" fill="#767676"/><rect x="1379" y="100" width="1" height="2" fill="#767676"/><rect x="1382" y="100" width="1" height="2" fill="#767676"/><rect x="1385" y="100" width="1" height="2" fill="#767676"/><rect x="1387" y="98" width="1" height="4" fill="#767676"/><rect x="1390" y="100" width="1" height="2" fill="#767676"/><rect x="1393" y="100" width="1" height="2" fill="#767676"/><rect x="1396" y="100" width="1" height="2" fill="#767676"/><rect x="1399" y="100" width="1" height="2" fill="#767676"/><rect x="1402" y="87" width="1" height="15" fill="#767676"/><rect x="1404" y="100" width="1" height="2" fill="#767676"/><rect x="1407" y="100" width="1" height="2" fill="#767676"/><rect x="1410" y="100" width="1" height="2" fill="#767676"/><rect x="1413" y="100" width="1" height="2" fill="#767676"/><rect x="1416" y="98" width="1" height="4" fill="#767676"/><rect x="1419" y="100" width="1" height="2" fill="#767676"/><rect x="1421" y="100" width="1" height="2" fill="#767676"/><rect x="1424" y="100" width="1" height="2" fill="#767676"/><rect x="1427" y="100" width="1" height="2" fill="#767676"/><rect x="1430" y="87" width="1" height="15" fill="#767676"/><rect x="1433" y="100" width="1" height="2" fill="#767676"/><rect x="1436" y="100" width="1" height="2" fill="#767676"/><rect x="1438" y="100" width="1" height="2" fill="#767676"/><rect x="1441" y="100" width="1" height="2" fill="#767676"/><rect x="1444" y="98" width="1" height="4" fill="#767676"/><rect x="1447" y="100" width="1" height="2" fill="#767676"/><rect x="1450" y="100" width="1" height="2" fill="#767676"/><rect x="1453" y="100" width="1" height="2" fill="#767676"/><rect x="1455" y="100" width="1" height="2" fill="#767676"/><rect x="1458" y="87" width="1" height="15" fill="#767676"/><rect x="1461" y="100" width="1" height="2" fill="#767676"/><rect x="1464" y="100" width="1" height="2" fill="#767676"/><rect x="1467" y="100" width="1" height="2" fill="#767676"/><rect x="1470" y="100" width="1" height="2" fill="#767676"/><rect x="1472" y="98" width="1" height="4" fill="#767676"/><rect x="1475" y="100" width="1" height="2" fill="#767676"/><rect x="1478" y="100" width="1" height="2" fill="#767676"/><rect x="1481" y="100" width="1" height="2" fill="#767676"/><rect x="1484" y="100" width="1" height="2" fill="#767676"/><rect x="1487" y="87" width="1" height="15" fill="#767676"/><rect x="1489" y="100" width="1" height="2" fill="#767676"/><rect x="1492" y="100" width="1" height="2" fill="#767676"/><rect x="1495" y="100" width="1" height="2" fill="#767676"/><rect x="1498" y="100" width="1" height="2" fill="#767676"/><rect x="1501" y="98" width="1" height="4" fill="#767676"/><rect x="1504" y="100" width="1" height="2" fill="#767676"/><rect x="1506" y="100" width="1" height="2" fill="#767676"/><rect x="1509" y="100" width="1" height="2" fill="#767676"/><rect x="1512" y="100" width="1" height="2" fill="#767676"/><rect x="1515" y="87" width="1" height="15" fill="#767676"/><rect x="1518" y="100" width="1" height="2" fill="#767676"/><rect x="1521" y="100" width="1" height="2" fill="#767676"/><rect x="1523" y="100" width="1" height="2" fill="#767676"/><rect x="1526" y="100" width="1" height="2" fill="#767676"/><rect x="1529" y="98" width="1" height="4" fill="#767676"/><rect x="1532" y="100" width="1" height="2" fill="#767676"/><rect x="1535" y="100" width="1" height="2" fill="#767676"/><rect x="1538" y="100" width="1" height="2" fill="#767676"/><rect x="1540" y="100" width="1" height="2" fill="#767676"/><rect x="1543" y="87" width="1" height="15" fill="#767676"/><rect x="1546" y="100" width="1" height="2" fill="#767676"/><rect x="1549" y="100" width="1" height="2" fill="#767676"/><rect x="1552" y="100" width="1" height="2" fill="#767676"/><rect x="1555" y="100" width="1" height="2" fill="#767676"/><rect x="1557" y="98" width="1" height="4" fill="#767676"/><rect x="1560" y="100" width="1" height="2" fill="#767676"/><rect x="1563" y="100" width="1" height="2" fill="#767676"/><rect x="1566" y="100" width="1" height="2" fill="#767676"/><rect x="1569" y="100" width="1" height="2" fill="#767676"/><rect x="1572" y="87" width="1" height="15" fill="#767676"/><rect x="1574" y="100" width="1" height="2" fill="#767676"/><rect x="1577" y="100" width="1" height="2" fill="#767676"/><rect x="1580" y="100" width="1" height="2" fill="#767676"/><rect x="1583" y="100" width="1" height="2" fill="#767676"/><rect x="1586" y="98" width="1" height="4" fill="#767676"/><rect x="1589" y="100" width="1" height="2" fill="#767676"/><rect x="1591" y="100" width="1" height="2" fill="#767676"/><rect x="1594" y="100" width="1" height="2" fill="#767676"/><rect x="1597" y="100" width="1" height="2" fill="#767676"/><rect x="1600" y="87" width="1" height="15" fill="#767676"/><rect x="1603" y="100" width="1" height="2" fill="#767676"/><rect x="1606" y="100" width="1" height="2" fill="#767676"/><rect x="1609" y="100" width="1" height="2" fill="#767676"/><rect x="1611" y="100" width="1" height="2" fill="#767676"/><rect x="1614" y="98" width="1" height="4" fill="#767676"/><rect x="1617" y="100" width="1" height="2" fill="#767676"/><rect x="1620" y="100" width="1" height="2" fill="#767676"/><rect x="1623" y="100" width="1" height="2" fill="#767676"/><rect x="1626" y="100" width="1" height="2" fill="#767676"/><rect x="1628" y="87" width="1" height="15" fill="#767676"/><rect x="1631" y="100" width="1" height="2" fill="#767676"/><rect x="1634" y="100" width="1" height="2" fill="#767676"/><rect x="1637" y="100" width="1" height="2" fill="#767676"/><rect x="1640" y="100" width="1" height="2" fill="#767676"/><rect x="1643" y="98" width="1" height="4" fill="#767676"/><rect x="1645" y="100" width="1" height="2" fill="#767676"/><rect x="1648" y="100" width="1" height="2" fill="#767676"/><rect x="1651" y="100" width="1" height="2" fill="#767676"/><rect x="1654" y="100" width="1" height="2" fill="#767676"/><rect x="1657" y="87" width="1" height="15" fill="#767676"/><rect x="1660" y="100" width="1" height="2" fill="#767676"/><rect x="1662" y="100" width="1" height="2" fill="#767676"/><rect x="1665" y="100" width="1" height="2" fill="#767676"/><rect x="1668" y="100" width="1" height="2" fill="#767676"/><rect x="1671" y="98" width="1" height="4" fill="#767676"/><rect x="1674" y="100" width="1" height="2" fill="#767676"/><rect x="1677" y="100" width="1" height="2" fill="#767676"/><rect x="1679" y="100" width="1" height="2" fill="#767676"/><rect x="1682" y="100" width="1" height="2" fill="#767676"/><rect x="1685" y="87" width="1" height="15" fill="#767676"/><rect x="1688" y="100" width="1" height="2" fill="#767676"/><rect x="1691" y="100" width="1" height="2" fill="#767676"/><rect x="1694" y="100" width="1" height="2" fill="#767676"/><rect x="1696" y="100" width="1" height="2" fill="#767676"/><rect x="1699" y="98" width="1" height="4" fill="#767676"/><rect x="1702" y="100" width="1" height="2" fill="#767676"/><rect x="1705" y="100" width="1" height="2" fill="#767676"/><rect x="1708" y="100" width="1" height="2" fill="#767676"/><rect x="1711" y="100" width="1" height="2" fill="#767676"/><rect x="1713" y="87" width="1" height="15" fill="#767676"/><rect x="1716" y="100" width="1" height="2" fill="#767676"/><rect x="1719" y="100" width="1" height="2" fill="#767676"/><rect x="1722" y="100" width="1" height="2" fill="#767676"/><rect x="1725" y="100" width="1" height="2" fill="#767676"/><rect x="1728" y="98" width="1" height="4" fill="#767676"/><rect x="1730" y="100" width="1" height="2" fill="#767676"/><rect x="1733" y="100" width="1" height="2" fill="#767676"/><rect x="1736" y="100" width="1" height="2" fill="#767676"/><rect x="1739" y="100" width="1" height="2" fill="#767676"/><rect x="1742" y="87" width="1" height="15" fill="#767676"/><rect x="1745" y="100" width="1" height="2" fill="#767676"/><rect x="1747" y="100" width="1" height="2" fill="#767676"/><rect x="1750" y="100" width="1" height="2" fill="#767676"/><rect x="1753" y="100" width="1" height="2" fill="#767676"/><rect x="1756" y="98" width="1" height="4" fill="#767676"/><rect x="1759" y="100" width="1" height="2" fill="#767676"/><rect x="1762" y="100" width="1" height="2" fill="#767676"/><rect x="1764" y="100" width="1" height="2" fill="#767676"/><rect x="1767" y="100" width="1" height="2" fill="#767676"/><rect x="1770" y="87" width="1" height="15" fill="#767676"/><rect x="1773" y="100" width="1" height="2" fill="#767676"/><rect x="1776" y="100" width="1" height="2" fill="#767676"/><rect x="1779" y="100" width="1" height="2" fill="#767676"/><rect x="1781" y="100" width="1" height="2" fill="#767676"/><rect x="1784" y="98" width="1" height="4" fill="#767676"/><rect x="1787" y="100" width="1" height="2" fill="#767676"/><rect x="1790" y="100" width="1" height="2" fill="#767676"/><rect x="1793" y="100" width="1" height="2" fill="#767676"/><rect x="1796" y="100" width="1" height="2" fill="#767676"/><rect x="1798" y="87" width="1" height="15" fill="#767676"/><rect x="1801" y="100" width="1" height="2" fill="#767676"/><rect x="1804" y="100" width="1" height="2" fill="#767676"/><rect x="1807" y="100" width="1" height="2" fill="#767676"/><rect x="1810" y="100" width="1" height="2" fill="#767676"/><rect x="1813" y="98" width="1" height="4" fill="#767676"/><rect x="1815" y="100" width="1" height="2" fill="#767676"/><rect x="1818" y="100" width="1" height="2" fill="#767676"/><rect x="1821" y="100" width="1" height="2" fill="#767676"/><rect x="1824" y="100" width="1" height="2" fill="#767676"/><rect x="1827" y="87" width="1" height="15" fill="#767676"/><rect x="1830" y="100" width="1" height="2" fill="#767676"/><rect x="1832" y="100" width="1" height="2" fill="#767676"/><rect x="1835" y="100" width="1" height="2" fill="#767676"/><rect x="1838" y="100" width="1" height="2" fill="#767676"/><rect x="1841" y="98" width="1" height="4" fill="#767676"/><rect x="1844" y="100" width="1" height="2" fill="#767676"/><rect x="1847" y="100" width="1" height="2" fill="#767676"/><rect x="1849" y="100" width="1" height="2" fill="#767676"/></svg>
<div style="left:47px;top:86px;width:1805px;height:16px;overflow:hidden">
<div class="r" style="left:-4px;top:2px;font-size:9.2px;line-height:10px;color:#7c7c7c;transform:scaleY(1.15);transform-origin:0 0">150</div>
<div class="r" style="left:24px;top:2px;font-size:9.2px;line-height:10px;color:#7c7c7c;transform:scaleY(1.15);transform-origin:0 0">140</div>
<div class="r" style="left:52px;top:2px;font-size:9.2px;line-height:10px;color:#7c7c7c;transform:scaleY(1.15);transform-origin:0 0">130</div>
<div class="r" style="left:81px;top:2px;font-size:9.2px;line-height:10px;color:#7c7c7c;transform:scaleY(1.15);transform-origin:0 0">120</div>
<div class="r" style="left:109px;top:2px;font-size:9.2px;line-height:10px;color:#7c7c7c;transform:scaleY(1.15);transform-origin:0 0">110</div>
<div class="r" style="left:138px;top:2px;font-size:9.2px;line-height:10px;color:#7c7c7c;transform:scaleY(1.15);transform-origin:0 0">100</div>
<div class="r" style="left:166px;top:2px;font-size:9.2px;line-height:10px;color:#7c7c7c;transform:scaleY(1.15);transform-origin:0 0">90</div>
<div class="r" style="left:194px;top:2px;font-size:9.2px;line-height:10px;color:#7c7c7c;transform:scaleY(1.15);transform-origin:0 0">80</div>
<div class="r" style="left:223px;top:2px;font-size:9.2px;line-height:10px;color:#7c7c7c;transform:scaleY(1.15);transform-origin:0 0">70</div>
<div class="r" style="left:251px;top:2px;font-size:9.2px;line-height:10px;color:#7c7c7c;transform:scaleY(1.15);transform-origin:0 0">60</div>
<div class="r" style="left:279px;top:2px;font-size:9.2px;line-height:10px;color:#7c7c7c;transform:scaleY(1.15);transform-origin:0 0">50</div>
<div class="r" style="left:308px;top:2px;font-size:9.2px;line-height:10px;color:#7c7c7c;transform:scaleY(1.15);transform-origin:0 0">40</div>
<div class="r" style="left:336px;top:2px;font-size:9.2px;line-height:10px;color:#7c7c7c;transform:scaleY(1.15);transform-origin:0 0">30</div>
<div class="r" style="left:364px;top:2px;font-size:9.2px;line-height:10px;color:#7c7c7c;transform:scaleY(1.15);transform-origin:0 0">20</div>
<div class="r" style="left:393px;top:2px;font-size:9.2px;line-height:10px;color:#7c7c7c;transform:scaleY(1.15);transform-origin:0 0">10</div>
<div class="r" style="left:421px;top:2px;font-size:9.2px;line-height:10px;color:#7c7c7c;transform:scaleY(1.15);transform-origin:0 0">0</div>
<div class="r" style="left:449px;top:2px;font-size:9.2px;line-height:10px;color:#7c7c7c;transform:scaleY(1.15);transform-origin:0 0">10</div>
<div class="r" style="left:478px;top:2px;font-size:9.2px;line-height:10px;color:#7c7c7c;transform:scaleY(1.15);transform-origin:0 0">20</div>
<div class="r" style="left:506px;top:2px;font-size:9.2px;line-height:10px;color:#7c7c7c;transform:scaleY(1.15);transform-origin:0 0">30</div>
<div class="r" style="left:534px;top:2px;font-size:9.2px;line-height:10px;color:#7c7c7c;transform:scaleY(1.15);transform-origin:0 0">40</div>
<div class="r" style="left:563px;top:2px;font-size:9.2px;line-height:10px;color:#7c7c7c;transform:scaleY(1.15);transform-origin:0 0">50</div>
<div class="r" style="left:591px;top:2px;font-size:9.2px;line-height:10px;color:#7c7c7c;transform:scaleY(1.15);transform-origin:0 0">60</div>
<div class="r" style="left:619px;top:2px;font-size:9.2px;line-height:10px;color:#7c7c7c;transform:scaleY(1.15);transform-origin:0 0">70</div>
<div class="r" style="left:648px;top:2px;font-size:9.2px;line-height:10px;color:#7c7c7c;transform:scaleY(1.15);transform-origin:0 0">80</div>
<div class="r" style="left:676px;top:2px;font-size:9.2px;line-height:10px;color:#7c7c7c;transform:scaleY(1.15);transform-origin:0 0">90</div>
<div class="r" style="left:705px;top:2px;font-size:9.2px;line-height:10px;color:#7c7c7c;transform:scaleY(1.15);transform-origin:0 0">100</div>
<div class="r" style="left:733px;top:2px;font-size:9.2px;line-height:10px;color:#7c7c7c;transform:scaleY(1.15);transform-origin:0 0">110</div>
<div class="r" style="left:761px;top:2px;font-size:9.2px;line-height:10px;color:#7c7c7c;transform:scaleY(1.15);transform-origin:0 0">120</div>
<div class="r" style="left:790px;top:2px;font-size:9.2px;line-height:10px;color:#7c7c7c;transform:scaleY(1.15);transform-origin:0 0">130</div>
<div class="r" style="left:818px;top:2px;font-size:9.2px;line-height:10px;color:#7c7c7c;transform:scaleY(1.15);transform-origin:0 0">140</div>
<div class="r" style="left:846px;top:2px;font-size:9.2px;line-height:10px;color:#7c7c7c;transform:scaleY(1.15);transform-origin:0 0">150</div>
<div class="r" style="left:875px;top:2px;font-size:9.2px;line-height:10px;color:#7c7c7c;transform:scaleY(1.15);transform-origin:0 0">160</div>
<div class="r" style="left:903px;top:2px;font-size:9.2px;line-height:10px;color:#7c7c7c;transform:scaleY(1.15);transform-origin:0 0">170</div>
<div class="r" style="left:931px;top:2px;font-size:9.2px;line-height:10px;color:#7c7c7c;transform:scaleY(1.15);transform-origin:0 0">180</div>
<div class="r" style="left:960px;top:2px;font-size:9.2px;line-height:10px;color:#7c7c7c;transform:scaleY(1.15);transform-origin:0 0">190</div>
<div class="r" style="left:988px;top:2px;font-size:9.2px;line-height:10px;color:#7c7c7c;transform:scaleY(1.15);transform-origin:0 0">200</div>
<div class="r" style="left:1016px;top:2px;font-size:9.2px;line-height:10px;color:#7c7c7c;transform:scaleY(1.15);transform-origin:0 0">210</div>
<div class="r" style="left:1045px;top:2px;font-size:9.2px;line-height:10px;color:#7c7c7c;transform:scaleY(1.15);transform-origin:0 0">220</div>
<div class="r" style="left:1073px;top:2px;font-size:9.2px;line-height:10px;color:#7c7c7c;transform:scaleY(1.15);transform-origin:0 0">230</div>
<div class="r" style="left:1101px;top:2px;font-size:9.2px;line-height:10px;color:#7c7c7c;transform:scaleY(1.15);transform-origin:0 0">240</div>
<div class="r" style="left:1130px;top:2px;font-size:9.2px;line-height:10px;color:#7c7c7c;transform:scaleY(1.15);transform-origin:0 0">250</div>
<div class="r" style="left:1158px;top:2px;font-size:9.2px;line-height:10px;color:#7c7c7c;transform:scaleY(1.15);transform-origin:0 0">260</div>
<div class="r" style="left:1186px;top:2px;font-size:9.2px;line-height:10px;color:#7c7c7c;transform:scaleY(1.15);transform-origin:0 0">270</div>
<div class="r" style="left:1215px;top:2px;font-size:9.2px;line-height:10px;color:#7c7c7c;transform:scaleY(1.15);transform-origin:0 0">280</div>
<div class="r" style="left:1243px;top:2px;font-size:9.2px;line-height:10px;color:#7c7c7c;transform:scaleY(1.15);transform-origin:0 0">290</div>
<div class="r" style="left:1272px;top:2px;font-size:9.2px;line-height:10px;color:#7c7c7c;transform:scaleY(1.15);transform-origin:0 0">300</div>
<div class="r" style="left:1300px;top:2px;font-size:9.2px;line-height:10px;color:#7c7c7c;transform:scaleY(1.15);transform-origin:0 0">310</div>
<div class="r" style="left:1328px;top:2px;font-size:9.2px;line-height:10px;color:#7c7c7c;transform:scaleY(1.15);transform-origin:0 0">320</div>
<div class="r" style="left:1357px;top:2px;font-size:9.2px;line-height:10px;color:#7c7c7c;transform:scaleY(1.15);transform-origin:0 0">330</div>
<div class="r" style="left:1385px;top:2px;font-size:9.2px;line-height:10px;color:#7c7c7c;transform:scaleY(1.15);transform-origin:0 0">340</div>
<div class="r" style="left:1413px;top:2px;font-size:9.2px;line-height:10px;color:#7c7c7c;transform:scaleY(1.15);transform-origin:0 0">350</div>
<div class="r" style="left:1442px;top:2px;font-size:9.2px;line-height:10px;color:#7c7c7c;transform:scaleY(1.15);transform-origin:0 0">360</div>
<div class="r" style="left:1470px;top:2px;font-size:9.2px;line-height:10px;color:#7c7c7c;transform:scaleY(1.15);transform-origin:0 0">370</div>
<div class="r" style="left:1498px;top:2px;font-size:9.2px;line-height:10px;color:#7c7c7c;transform:scaleY(1.15);transform-origin:0 0">380</div>
<div class="r" style="left:1527px;top:2px;font-size:9.2px;line-height:10px;color:#7c7c7c;transform:scaleY(1.15);transform-origin:0 0">390</div>
<div class="r" style="left:1555px;top:2px;font-size:9.2px;line-height:10px;color:#7c7c7c;transform:scaleY(1.15);transform-origin:0 0">400</div>
<div class="r" style="left:1583px;top:2px;font-size:9.2px;line-height:10px;color:#7c7c7c;transform:scaleY(1.15);transform-origin:0 0">410</div>
<div class="r" style="left:1612px;top:2px;font-size:9.2px;line-height:10px;color:#7c7c7c;transform:scaleY(1.15);transform-origin:0 0">420</div>
<div class="r" style="left:1640px;top:2px;font-size:9.2px;line-height:10px;color:#7c7c7c;transform:scaleY(1.15);transform-origin:0 0">430</div>
<div class="r" style="left:1668px;top:2px;font-size:9.2px;line-height:10px;color:#7c7c7c;transform:scaleY(1.15);transform-origin:0 0">440</div>
<div class="r" style="left:1697px;top:2px;font-size:9.2px;line-height:10px;color:#7c7c7c;transform:scaleY(1.15);transform-origin:0 0">450</div>
<div class="r" style="left:1725px;top:2px;font-size:9.2px;line-height:10px;color:#7c7c7c;transform:scaleY(1.15);transform-origin:0 0">460</div>
<div class="r" style="left:1753px;top:2px;font-size:9.2px;line-height:10px;color:#7c7c7c;transform:scaleY(1.15);transform-origin:0 0">470</div>
<div class="r" style="left:1782px;top:2px;font-size:9.2px;line-height:10px;color:#7c7c7c;transform:scaleY(1.15);transform-origin:0 0">480</div>
</div>
<div style="left:30px;top:87px;width:15px;height:15px;background:#2a2a2a"></div>
<div style="left:45px;top:87px;width:1px;height:15px;background:#666666"></div>
<svg style="position:absolute;left:0px;top:0px;" width="1" height="1" viewBox="0 0 1 1"><rect x="31" y="91" width="1" height="1" fill="#8a8a8a"/><rect x="33" y="91" width="1" height="1" fill="#8a8a8a"/><rect x="37" y="91" width="1" height="1" fill="#8a8a8a"/><rect x="39" y="91" width="1" height="1" fill="#8a8a8a"/><rect x="41" y="91" width="1" height="1" fill="#8a8a8a"/><rect x="43" y="91" width="1" height="1" fill="#8a8a8a"/><rect x="34" y="88" width="1" height="1" fill="#8a8a8a"/><rect x="34" y="94" width="1" height="1" fill="#8a8a8a"/><rect x="34" y="96" width="1" height="1" fill="#8a8a8a"/><rect x="34" y="98" width="1" height="1" fill="#8a8a8a"/><rect x="34" y="100" width="1" height="1" fill="#8a8a8a"/><path d="M34.5,89.8 L36.2,91.5 L34.5,93.2 L32.8,91.5 z" fill="none" stroke="#8a8a8a" stroke-width="0.8"/></svg>
<div style="left:30px;top:102px;width:15px;height:858px;background:#2a2a2a"></div>
<div style="left:30px;top:102px;width:15px;height:1px;background:#555555"></div>
<svg style="position:absolute;left:0px;top:0px;" width="1" height="1" viewBox="0 0 1 1"><rect x="41" y="177" width="4" height="1" fill="#767676"/><rect x="43" y="180" width="2" height="1" fill="#767676"/><rect x="43" y="183" width="2" height="1" fill="#767676"/><rect x="43" y="185" width="2" height="1" fill="#767676"/><rect x="43" y="188" width="2" height="1" fill="#767676"/><rect x="30" y="191" width="15" height="1" fill="#767676"/><rect x="43" y="194" width="2" height="1" fill="#767676"/><rect x="43" y="197" width="2" height="1" fill="#767676"/><rect x="43" y="200" width="2" height="1" fill="#767676"/><rect x="43" y="202" width="2" height="1" fill="#767676"/><rect x="41" y="205" width="4" height="1" fill="#767676"/><rect x="43" y="208" width="2" height="1" fill="#767676"/><rect x="43" y="211" width="2" height="1" fill="#767676"/><rect x="43" y="214" width="2" height="1" fill="#767676"/><rect x="43" y="217" width="2" height="1" fill="#767676"/><rect x="30" y="219" width="15" height="1" fill="#767676"/><rect x="43" y="222" width="2" height="1" fill="#767676"/><rect x="43" y="225" width="2" height="1" fill="#767676"/><rect x="43" y="228" width="2" height="1" fill="#767676"/><rect x="43" y="231" width="2" height="1" fill="#767676"/><rect x="41" y="234" width="4" height="1" fill="#767676"/><rect x="43" y="236" width="2" height="1" fill="#767676"/><rect x="43" y="239" width="2" height="1" fill="#767676"/><rect x="43" y="242" width="2" height="1" fill="#767676"/><rect x="43" y="245" width="2" height="1" fill="#767676"/><rect x="30" y="248" width="15" height="1" fill="#767676"/><rect x="43" y="251" width="2" height="1" fill="#767676"/><rect x="43" y="253" width="2" height="1" fill="#767676"/><rect x="43" y="256" width="2" height="1" fill="#767676"/><rect x="43" y="259" width="2" height="1" fill="#767676"/><rect x="41" y="262" width="4" height="1" fill="#767676"/><rect x="43" y="265" width="2" height="1" fill="#767676"/><rect x="43" y="268" width="2" height="1" fill="#767676"/><rect x="43" y="270" width="2" height="1" fill="#767676"/><rect x="43" y="273" width="2" height="1" fill="#767676"/><rect x="30" y="276" width="15" height="1" fill="#767676"/><rect x="43" y="279" width="2" height="1" fill="#767676"/><rect x="43" y="282" width="2" height="1" fill="#767676"/><rect x="43" y="285" width="2" height="1" fill="#767676"/><rect x="43" y="287" width="2" height="1" fill="#767676"/><rect x="41" y="290" width="4" height="1" fill="#767676"/><rect x="43" y="293" width="2" height="1" fill="#767676"/><rect x="43" y="296" width="2" height="1" fill="#767676"/><rect x="43" y="299" width="2" height="1" fill="#767676"/><rect x="43" y="302" width="2" height="1" fill="#767676"/><rect x="30" y="305" width="15" height="1" fill="#767676"/><rect x="43" y="307" width="2" height="1" fill="#767676"/><rect x="43" y="310" width="2" height="1" fill="#767676"/><rect x="43" y="313" width="2" height="1" fill="#767676"/><rect x="43" y="316" width="2" height="1" fill="#767676"/><rect x="41" y="319" width="4" height="1" fill="#767676"/><rect x="43" y="322" width="2" height="1" fill="#767676"/><rect x="43" y="324" width="2" height="1" fill="#767676"/><rect x="43" y="327" width="2" height="1" fill="#767676"/><rect x="43" y="330" width="2" height="1" fill="#767676"/><rect x="30" y="333" width="15" height="1" fill="#767676"/><rect x="43" y="336" width="2" height="1" fill="#767676"/><rect x="43" y="339" width="2" height="1" fill="#767676"/><rect x="43" y="341" width="2" height="1" fill="#767676"/><rect x="43" y="344" width="2" height="1" fill="#767676"/><rect x="41" y="347" width="4" height="1" fill="#767676"/><rect x="43" y="350" width="2" height="1" fill="#767676"/><rect x="43" y="353" width="2" height="1" fill="#767676"/><rect x="43" y="356" width="2" height="1" fill="#767676"/><rect x="43" y="358" width="2" height="1" fill="#767676"/><rect x="30" y="361" width="15" height="1" fill="#767676"/><rect x="43" y="364" width="2" height="1" fill="#767676"/><rect x="43" y="367" width="2" height="1" fill="#767676"/><rect x="43" y="370" width="2" height="1" fill="#767676"/><rect x="43" y="373" width="2" height="1" fill="#767676"/><rect x="41" y="375" width="4" height="1" fill="#767676"/><rect x="43" y="378" width="2" height="1" fill="#767676"/><rect x="43" y="381" width="2" height="1" fill="#767676"/><rect x="43" y="384" width="2" height="1" fill="#767676"/><rect x="43" y="387" width="2" height="1" fill="#767676"/><rect x="30" y="390" width="15" height="1" fill="#767676"/><rect x="43" y="392" width="2" height="1" fill="#767676"/><rect x="43" y="395" width="2" height="1" fill="#767676"/><rect x="43" y="398" width="2" height="1" fill="#767676"/><rect x="43" y="401" width="2" height="1" fill="#767676"/><rect x="41" y="404" width="4" height="1" fill="#767676"/><rect x="43" y="407" width="2" height="1" fill="#767676"/><rect x="43" y="409" width="2" height="1" fill="#767676"/><rect x="43" y="412" width="2" height="1" fill="#767676"/><rect x="43" y="415" width="2" height="1" fill="#767676"/><rect x="30" y="418" width="15" height="1" fill="#767676"/><rect x="43" y="421" width="2" height="1" fill="#767676"/><rect x="43" y="424" width="2" height="1" fill="#767676"/><rect x="43" y="426" width="2" height="1" fill="#767676"/><rect x="43" y="429" width="2" height="1" fill="#767676"/><rect x="41" y="432" width="4" height="1" fill="#767676"/><rect x="43" y="435" width="2" height="1" fill="#767676"/><rect x="43" y="438" width="2" height="1" fill="#767676"/><rect x="43" y="441" width="2" height="1" fill="#767676"/><rect x="43" y="443" width="2" height="1" fill="#767676"/><rect x="30" y="446" width="15" height="1" fill="#767676"/><rect x="43" y="449" width="2" height="1" fill="#767676"/><rect x="43" y="452" width="2" height="1" fill="#767676"/><rect x="43" y="455" width="2" height="1" fill="#767676"/><rect x="43" y="458" width="2" height="1" fill="#767676"/><rect x="41" y="460" width="4" height="1" fill="#767676"/><rect x="43" y="463" width="2" height="1" fill="#767676"/><rect x="43" y="466" width="2" height="1" fill="#767676"/><rect x="43" y="469" width="2" height="1" fill="#767676"/><rect x="43" y="472" width="2" height="1" fill="#767676"/><rect x="30" y="475" width="15" height="1" fill="#767676"/><rect x="43" y="477" width="2" height="1" fill="#767676"/><rect x="43" y="480" width="2" height="1" fill="#767676"/><rect x="43" y="483" width="2" height="1" fill="#767676"/><rect x="43" y="486" width="2" height="1" fill="#767676"/><rect x="41" y="489" width="4" height="1" fill="#767676"/><rect x="43" y="492" width="2" height="1" fill="#767676"/><rect x="43" y="494" width="2" height="1" fill="#767676"/><rect x="43" y="497" width="2" height="1" fill="#767676"/><rect x="43" y="500" width="2" height="1" fill="#767676"/><rect x="30" y="503" width="15" height="1" fill="#767676"/><rect x="43" y="506" width="2" height="1" fill="#767676"/><rect x="43" y="509" width="2" height="1" fill="#767676"/><rect x="43" y="511" width="2" height="1" fill="#767676"/><rect x="43" y="514" width="2" height="1" fill="#767676"/><rect x="41" y="517" width="4" height="1" fill="#767676"/><rect x="43" y="520" width="2" height="1" fill="#767676"/><rect x="43" y="523" width="2" height="1" fill="#767676"/><rect x="43" y="526" width="2" height="1" fill="#767676"/><rect x="43" y="528" width="2" height="1" fill="#767676"/><rect x="30" y="531" width="15" height="1" fill="#767676"/><rect x="43" y="534" width="2" height="1" fill="#767676"/><rect x="43" y="537" width="2" height="1" fill="#767676"/><rect x="43" y="540" width="2" height="1" fill="#767676"/><rect x="43" y="543" width="2" height="1" fill="#767676"/><rect x="41" y="545" width="4" height="1" fill="#767676"/><rect x="43" y="548" width="2" height="1" fill="#767676"/><rect x="43" y="551" width="2" height="1" fill="#767676"/><rect x="43" y="554" width="2" height="1" fill="#767676"/><rect x="43" y="557" width="2" height="1" fill="#767676"/><rect x="30" y="560" width="15" height="1" fill="#767676"/><rect x="43" y="562" width="2" height="1" fill="#767676"/><rect x="43" y="565" width="2" height="1" fill="#767676"/><rect x="43" y="568" width="2" height="1" fill="#767676"/><rect x="43" y="571" width="2" height="1" fill="#767676"/><rect x="41" y="574" width="4" height="1" fill="#767676"/><rect x="43" y="577" width="2" height="1" fill="#767676"/><rect x="43" y="579" width="2" height="1" fill="#767676"/><rect x="43" y="582" width="2" height="1" fill="#767676"/><rect x="43" y="585" width="2" height="1" fill="#767676"/><rect x="30" y="588" width="15" height="1" fill="#767676"/><rect x="43" y="591" width="2" height="1" fill="#767676"/><rect x="43" y="594" width="2" height="1" fill="#767676"/><rect x="43" y="597" width="2" height="1" fill="#767676"/><rect x="43" y="599" width="2" height="1" fill="#767676"/><rect x="41" y="602" width="4" height="1" fill="#767676"/><rect x="43" y="605" width="2" height="1" fill="#767676"/><rect x="43" y="608" width="2" height="1" fill="#767676"/><rect x="43" y="611" width="2" height="1" fill="#767676"/><rect x="43" y="614" width="2" height="1" fill="#767676"/><rect x="30" y="616" width="15" height="1" fill="#767676"/><rect x="43" y="619" width="2" height="1" fill="#767676"/><rect x="43" y="622" width="2" height="1" fill="#767676"/><rect x="43" y="625" width="2" height="1" fill="#767676"/><rect x="43" y="628" width="2" height="1" fill="#767676"/><rect x="41" y="631" width="4" height="1" fill="#767676"/><rect x="43" y="633" width="2" height="1" fill="#767676"/><rect x="43" y="636" width="2" height="1" fill="#767676"/><rect x="43" y="639" width="2" height="1" fill="#767676"/><rect x="43" y="642" width="2" height="1" fill="#767676"/><rect x="30" y="645" width="15" height="1" fill="#767676"/><rect x="43" y="648" width="2" height="1" fill="#767676"/><rect x="43" y="650" width="2" height="1" fill="#767676"/><rect x="43" y="653" width="2" height="1" fill="#767676"/><rect x="43" y="656" width="2" height="1" fill="#767676"/><rect x="41" y="659" width="4" height="1" fill="#767676"/><rect x="43" y="662" width="2" height="1" fill="#767676"/><rect x="43" y="665" width="2" height="1" fill="#767676"/><rect x="43" y="667" width="2" height="1" fill="#767676"/><rect x="43" y="670" width="2" height="1" fill="#767676"/><rect x="30" y="673" width="15" height="1" fill="#767676"/><rect x="43" y="676" width="2" height="1" fill="#767676"/><rect x="43" y="679" width="2" height="1" fill="#767676"/><rect x="43" y="682" width="2" height="1" fill="#767676"/><rect x="43" y="684" width="2" height="1" fill="#767676"/><rect x="41" y="687" width="4" height="1" fill="#767676"/><rect x="43" y="690" width="2" height="1" fill="#767676"/><rect x="43" y="693" width="2" height="1" fill="#767676"/><rect x="43" y="696" width="2" height="1" fill="#767676"/><rect x="43" y="699" width="2" height="1" fill="#767676"/><rect x="30" y="701" width="15" height="1" fill="#767676"/><rect x="43" y="704" width="2" height="1" fill="#767676"/><rect x="43" y="707" width="2" height="1" fill="#767676"/><rect x="43" y="710" width="2" height="1" fill="#767676"/><rect x="43" y="713" width="2" height="1" fill="#767676"/><rect x="41" y="716" width="4" height="1" fill="#767676"/><rect x="43" y="718" width="2" height="1" fill="#767676"/><rect x="43" y="721" width="2" height="1" fill="#767676"/><rect x="43" y="724" width="2" height="1" fill="#767676"/><rect x="43" y="727" width="2" height="1" fill="#767676"/><rect x="30" y="730" width="15" height="1" fill="#767676"/><rect x="43" y="733" width="2" height="1" fill="#767676"/><rect x="43" y="735" width="2" height="1" fill="#767676"/><rect x="43" y="738" width="2" height="1" fill="#767676"/><rect x="43" y="741" width="2" height="1" fill="#767676"/><rect x="41" y="744" width="4" height="1" fill="#767676"/><rect x="43" y="747" width="2" height="1" fill="#767676"/><rect x="43" y="750" width="2" height="1" fill="#767676"/><rect x="43" y="752" width="2" height="1" fill="#767676"/><rect x="43" y="755" width="2" height="1" fill="#767676"/><rect x="30" y="758" width="15" height="1" fill="#767676"/><rect x="43" y="761" width="2" height="1" fill="#767676"/><rect x="43" y="764" width="2" height="1" fill="#767676"/><rect x="43" y="767" width="2" height="1" fill="#767676"/><rect x="43" y="769" width="2" height="1" fill="#767676"/><rect x="41" y="772" width="4" height="1" fill="#767676"/><rect x="43" y="775" width="2" height="1" fill="#767676"/><rect x="43" y="778" width="2" height="1" fill="#767676"/><rect x="43" y="781" width="2" height="1" fill="#767676"/><rect x="43" y="784" width="2" height="1" fill="#767676"/><rect x="30" y="786" width="15" height="1" fill="#767676"/><rect x="43" y="789" width="2" height="1" fill="#767676"/><rect x="43" y="792" width="2" height="1" fill="#767676"/><rect x="43" y="795" width="2" height="1" fill="#767676"/><rect x="43" y="798" width="2" height="1" fill="#767676"/><rect x="41" y="801" width="4" height="1" fill="#767676"/><rect x="43" y="803" width="2" height="1" fill="#767676"/><rect x="43" y="806" width="2" height="1" fill="#767676"/><rect x="43" y="809" width="2" height="1" fill="#767676"/><rect x="43" y="812" width="2" height="1" fill="#767676"/><rect x="30" y="815" width="15" height="1" fill="#767676"/><rect x="43" y="818" width="2" height="1" fill="#767676"/><rect x="43" y="820" width="2" height="1" fill="#767676"/><rect x="43" y="823" width="2" height="1" fill="#767676"/><rect x="43" y="826" width="2" height="1" fill="#767676"/><rect x="41" y="829" width="4" height="1" fill="#767676"/><rect x="43" y="832" width="2" height="1" fill="#767676"/><rect x="43" y="835" width="2" height="1" fill="#767676"/><rect x="43" y="837" width="2" height="1" fill="#767676"/><rect x="43" y="840" width="2" height="1" fill="#767676"/><rect x="30" y="843" width="15" height="1" fill="#767676"/><rect x="43" y="846" width="2" height="1" fill="#767676"/><rect x="43" y="849" width="2" height="1" fill="#767676"/><rect x="43" y="852" width="2" height="1" fill="#767676"/><rect x="43" y="854" width="2" height="1" fill="#767676"/><rect x="41" y="857" width="4" height="1" fill="#767676"/><rect x="43" y="860" width="2" height="1" fill="#767676"/><rect x="43" y="863" width="2" height="1" fill="#767676"/><rect x="43" y="866" width="2" height="1" fill="#767676"/><rect x="43" y="869" width="2" height="1" fill="#767676"/><rect x="30" y="872" width="15" height="1" fill="#767676"/><rect x="43" y="874" width="2" height="1" fill="#767676"/><rect x="43" y="877" width="2" height="1" fill="#767676"/><rect x="43" y="880" width="2" height="1" fill="#767676"/><rect x="43" y="883" width="2" height="1" fill="#767676"/><rect x="41" y="886" width="4" height="1" fill="#767676"/><rect x="43" y="889" width="2" height="1" fill="#767676"/><rect x="43" y="891" width="2" height="1" fill="#767676"/><rect x="43" y="894" width="2" height="1" fill="#767676"/><rect x="43" y="897" width="2" height="1" fill="#767676"/><rect x="30" y="900" width="15" height="1" fill="#767676"/><rect x="43" y="903" width="2" height="1" fill="#767676"/><rect x="43" y="906" width="2" height="1" fill="#767676"/><rect x="43" y="908" width="2" height="1" fill="#767676"/><rect x="43" y="911" width="2" height="1" fill="#767676"/><rect x="41" y="914" width="4" height="1" fill="#767676"/></svg>
<div style="left:30px;top:177px;width:12px;height:738px;overflow:hidden">
<div class="r" style="left:2px;top:-12.0px;font-size:10px;line-height:9px;color:#7c7c7c">3</div>
<div class="r" style="left:2px;top:-3.5px;font-size:10px;line-height:9px;color:#7c7c7c">0</div>
<div class="r" style="left:2px;top:16.0px;font-size:10px;line-height:9px;color:#7c7c7c">2</div>
<div class="r" style="left:2px;top:24.5px;font-size:10px;line-height:9px;color:#7c7c7c">0</div>
<div class="r" style="left:2px;top:44.0px;font-size:10px;line-height:9px;color:#7c7c7c">1</div>
<div class="r" style="left:2px;top:52.5px;font-size:10px;line-height:9px;color:#7c7c7c">0</div>
<div class="r" style="left:2px;top:73.0px;font-size:10px;line-height:9px;color:#7c7c7c">0</div>
<div class="r" style="left:2px;top:101.0px;font-size:10px;line-height:9px;color:#7c7c7c">1</div>
<div class="r" style="left:2px;top:109.5px;font-size:10px;line-height:9px;color:#7c7c7c">0</div>
<div class="r" style="left:2px;top:130.0px;font-size:10px;line-height:9px;color:#7c7c7c">2</div>
<div class="r" style="left:2px;top:138.5px;font-size:10px;line-height:9px;color:#7c7c7c">0</div>
<div class="r" style="left:2px;top:158.0px;font-size:10px;line-height:9px;color:#7c7c7c">3</div>
<div class="r" style="left:2px;top:166.5px;font-size:10px;line-height:9px;color:#7c7c7c">0</div>
<div class="r" style="left:2px;top:186.0px;font-size:10px;line-height:9px;color:#7c7c7c">4</div>
<div class="r" style="left:2px;top:194.5px;font-size:10px;line-height:9px;color:#7c7c7c">0</div>
<div class="r" style="left:2px;top:215.0px;font-size:10px;line-height:9px;color:#7c7c7c">5</div>
<div class="r" style="left:2px;top:223.5px;font-size:10px;line-height:9px;color:#7c7c7c">0</div>
<div class="r" style="left:2px;top:243.0px;font-size:10px;line-height:9px;color:#7c7c7c">6</div>
<div class="r" style="left:2px;top:251.5px;font-size:10px;line-height:9px;color:#7c7c7c">0</div>
<div class="r" style="left:2px;top:271.0px;font-size:10px;line-height:9px;color:#7c7c7c">7</div>
<div class="r" style="left:2px;top:279.5px;font-size:10px;line-height:9px;color:#7c7c7c">0</div>
<div class="r" style="left:2px;top:300.0px;font-size:10px;line-height:9px;color:#7c7c7c">8</div>
<div class="r" style="left:2px;top:308.5px;font-size:10px;line-height:9px;color:#7c7c7c">0</div>
<div class="r" style="left:2px;top:328.0px;font-size:10px;line-height:9px;color:#7c7c7c">9</div>
<div class="r" style="left:2px;top:336.5px;font-size:10px;line-height:9px;color:#7c7c7c">0</div>
<div class="r" style="left:2px;top:356.0px;font-size:10px;line-height:9px;color:#7c7c7c">1</div>
<div class="r" style="left:2px;top:364.5px;font-size:10px;line-height:9px;color:#7c7c7c">0</div>
<div class="r" style="left:2px;top:373.0px;font-size:10px;line-height:9px;color:#7c7c7c">0</div>
<div class="r" style="left:2px;top:385.0px;font-size:10px;line-height:9px;color:#7c7c7c">1</div>
<div class="r" style="left:2px;top:393.5px;font-size:10px;line-height:9px;color:#7c7c7c">1</div>
<div class="r" style="left:2px;top:402.0px;font-size:10px;line-height:9px;color:#7c7c7c">0</div>
<div class="r" style="left:2px;top:413.0px;font-size:10px;line-height:9px;color:#7c7c7c">1</div>
<div class="r" style="left:2px;top:421.5px;font-size:10px;line-height:9px;color:#7c7c7c">2</div>
<div class="r" style="left:2px;top:430.0px;font-size:10px;line-height:9px;color:#7c7c7c">0</div>
<div class="r" style="left:2px;top:441.0px;font-size:10px;line-height:9px;color:#7c7c7c">1</div>
<div class="r" style="left:2px;top:449.5px;font-size:10px;line-height:9px;color:#7c7c7c">3</div>
<div class="r" style="left:2px;top:458.0px;font-size:10px;line-height:9px;color:#7c7c7c">0</div>
<div class="r" style="left:2px;top:470.0px;font-size:10px;line-height:9px;color:#7c7c7c">1</div>
<div class="r" style="left:2px;top:478.5px;font-size:10px;line-height:9px;color:#7c7c7c">4</div>
<div class="r" style="left:2px;top:487.0px;font-size:10px;line-height:9px;color:#7c7c7c">0</div>
<div class="r" style="left:2px;top:498.0px;font-size:10px;line-height:9px;color:#7c7c7c">1</div>
<div class="r" style="left:2px;top:506.5px;font-size:10px;line-height:9px;color:#7c7c7c">5</div>
<div class="r" style="left:2px;top:515.0px;font-size:10px;line-height:9px;color:#7c7c7c">0</div>
<div class="r" style="left:2px;top:526.0px;font-size:10px;line-height:9px;color:#7c7c7c">1</div>
<div class="r" style="left:2px;top:534.5px;font-size:10px;line-height:9px;color:#7c7c7c">6</div>
<div class="r" style="left:2px;top:543.0px;font-size:10px;line-height:9px;color:#7c7c7c">0</div>
<div class="r" style="left:2px;top:555.0px;font-size:10px;line-height:9px;color:#7c7c7c">1</div>
<div class="r" style="left:2px;top:563.5px;font-size:10px;line-height:9px;color:#7c7c7c">7</div>
<div class="r" style="left:2px;top:572.0px;font-size:10px;line-height:9px;color:#7c7c7c">0</div>
<div class="r" style="left:2px;top:583.0px;font-size:10px;line-height:9px;color:#7c7c7c">1</div>
<div class="r" style="left:2px;top:591.5px;font-size:10px;line-height:9px;color:#7c7c7c">8</div>
<div class="r" style="left:2px;top:600.0px;font-size:10px;line-height:9px;color:#7c7c7c">0</div>
<div class="r" style="left:2px;top:611.0px;font-size:10px;line-height:9px;color:#7c7c7c">1</div>
<div class="r" style="left:2px;top:619.5px;font-size:10px;line-height:9px;color:#7c7c7c">9</div>
<div class="r" style="left:2px;top:628.0px;font-size:10px;line-height:9px;color:#7c7c7c">0</div>
<div class="r" style="left:2px;top:640.0px;font-size:10px;line-height:9px;color:#7c7c7c">2</div>
<div class="r" style="left:2px;top:648.5px;font-size:10px;line-height:9px;color:#7c7c7c">0</div>
<div class="r" style="left:2px;top:657.0px;font-size:10px;line-height:9px;color:#7c7c7c">0</div>
<div class="r" style="left:2px;top:668.0px;font-size:10px;line-height:9px;color:#7c7c7c">2</div>
<div class="r" style="left:2px;top:676.5px;font-size:10px;line-height:9px;color:#7c7c7c">1</div>
<div class="r" style="left:2px;top:685.0px;font-size:10px;line-height:9px;color:#7c7c7c">0</div>
<div class="r" style="left:2px;top:697.0px;font-size:10px;line-height:9px;color:#7c7c7c">2</div>
<div class="r" style="left:2px;top:705.5px;font-size:10px;line-height:9px;color:#7c7c7c">2</div>
<div class="r" style="left:2px;top:714.0px;font-size:10px;line-height:9px;color:#7c7c7c">0</div>
<div class="r" style="left:2px;top:725.0px;font-size:10px;line-height:9px;color:#7c7c7c">2</div>
<div class="r" style="left:2px;top:733.5px;font-size:10px;line-height:9px;color:#7c7c7c">3</div>
<div class="r" style="left:2px;top:742.0px;font-size:10px;line-height:9px;color:#7c7c7c">0</div>
</div>
<div style="left:1852px;top:86px;width:15px;height:874px;background:#535353"></div>
<svg style="position:absolute;left:0px;top:0px;" width="1" height="1" viewBox="0 0 1 1"><polyline points="1855.5,96.5 1859.5,93 1863.5,96.5" fill="none" stroke="#6a6a6a" stroke-width="1"/></svg>
<div style="left:1867px;top:57px;width:3px;height:903px;background:#3a3a3a"></div>
<div style="left:1870px;top:57px;width:12px;height:903px;background:#535353"></div>
<div style="left:466px;top:248px;width:842px;height:595px;background:#fff;border-left:1px solid #3c3c3c;border-top:1px solid #3c3c3c;box-shadow:2px 2px 0 #000"></div>
<style>.cl{position:absolute;direction:rtl;text-align:right;white-space:nowrap;font-family:"Liberation Serif",serif;font-size:10.8px;line-height:14.6px;color:#111;-webkit-text-stroke:0.25px #111}.sp{color:#4c8ef5;line-height:0}.mk{-webkit-text-stroke:0;color:#4c8ef5;font-family:"Liberation Sans",sans-serif;font-weight:bold;font-size:9px;line-height:0}.hd{position:absolute;direction:rtl;text-align:center;white-space:nowrap;font-family:"Liberation Sans",sans-serif;font-weight:bold;font-size:9.6px;line-height:17px;color:#fff}</style>
<div style="left:512.5px;top:285px;width:750.0px;height:23px;background:#70ad47"></div>
<div style="left:512.5px;top:308px;width:750.0px;height:85px;background:#e2efd9"></div>
<div style="left:512.5px;top:393px;width:750.0px;height:85px;background:#ffffff"></div>
<div style="left:512.5px;top:478px;width:750.0px;height:86px;background:#e2efd9"></div>
<div style="left:512.5px;top:564px;width:750.0px;height:85px;background:#ffffff"></div>
<div style="left:512.5px;top:649px;width:750.0px;height:102px;background:#e2efd9"></div>
<svg style="position:absolute;left:0px;top:0px;" width="1" height="1" viewBox="0 0 1 1"><rect x="619" y="285" width="1" height="466" fill="#9fc5f0"/><rect x="726" y="285" width="1" height="466" fill="#9fc5f0"/><rect x="833" y="285" width="1" height="466" fill="#9fc5f0"/><rect x="940" y="285" width="1" height="466" fill="#9fc5f0"/><rect x="1047" y="285" width="1" height="466" fill="#9fc5f0"/><rect x="1154" y="285" width="1" height="466" fill="#9fc5f0"/><rect x="512.5" y="308" width="750.0" height="1" fill="#9fc5f0"/><rect x="512.5" y="393" width="750.0" height="1" fill="#9fc5f0"/><rect x="512.5" y="478" width="750.0" height="1" fill="#9fc5f0"/><rect x="512.5" y="564" width="750.0" height="1" fill="#9fc5f0"/><rect x="512.5" y="649" width="750.0" height="1" fill="#9fc5f0"/><rect x="512.5" y="751" width="750.0" height="1" fill="#9fc5f0"/></svg>
<div class="hd" style="left:1155.4px;top:285px;width:107.1px">ראשון<span class="mk" style="font-size:8.5px">#</span></div>
<div class="hd" style="left:1048.2px;top:285px;width:107.1px">שני<span class="mk" style="font-size:8.5px">#</span></div>
<div class="hd" style="left:941.1px;top:285px;width:107.1px">שלישי<span class="mk" style="font-size:8.5px">#</span></div>
<div class="hd" style="left:833.9px;top:285px;width:107.1px">רביעי<span class="mk" style="font-size:8.5px">#</span></div>
<div class="hd" style="left:726.8px;top:285px;width:107.1px">חמישי<span class="mk" style="font-size:8.5px">#</span></div>
<div class="hd" style="left:619.6px;top:285px;width:107.1px">שישי<span class="mk" style="font-size:8.5px">#</span></div>
<div class="hd" style="left:512.5px;top:285px;width:107.1px">שבת<span class="mk" style="font-size:8.5px">#</span></div>
<div class="cl" style="left:1157.7px;width:100px;top:311.0px;height:14px">ל׳‏<span class="mk">¶</span></div>
<div class="cl" style="left:1157.7px;width:100px;top:325.4px;height:14px">26<span class="sp">·</span>אוגוסט‏<span class="mk">#</span></div>
<div class="cl" style="left:1050.6px;width:100px;top:311.0px;height:14px">א׳‏<span class="mk">¶</span></div>
<div class="cl" style="left:1050.6px;width:100px;top:325.4px;height:14px">27<span class="sp">·</span>אוגוסט‏<span class="mk">#</span></div>
<div class="cl" style="left:943.4px;width:100px;top:311.0px;height:14px">ב׳‏<span class="mk">¶</span></div>
<div class="cl" style="left:943.4px;width:100px;top:325.4px;height:14px">28<span class="sp">·</span>אוגוסט‏<span class="mk">#</span></div>
<div class="cl" style="left:836.3px;width:100px;top:311.0px;height:14px">ג׳‏<span class="mk">¶</span></div>
<div class="cl" style="left:836.3px;width:100px;top:325.4px;height:14px">29<span class="sp">·</span>אוגוסט‏<span class="mk">#</span></div>
<div class="cl" style="left:729.1px;width:100px;top:311.0px;height:14px">ד׳‏<span class="mk">¶</span></div>
<div class="cl" style="left:729.1px;width:100px;top:325.4px;height:14px">30<span class="sp">·</span>אוגוסט‏<span class="mk">#</span></div>
<div class="cl" style="left:622.0px;width:100px;top:311.0px;height:14px">ה׳‏<span class="mk">¶</span></div>
<div class="cl" style="left:622.0px;width:100px;top:325.4px;height:14px">31<span class="sp">·</span>אוגוסט‏<span class="mk">¶</span></div>
<div class="cl" style="left:622.0px;width:100px;top:339.8px;height:14px">כניסת<span class="sp">·</span>שבת:<span class="sp">·</span>18:36‏<span class="mk">#</span></div>
<div class="cl" style="left:514.8px;width:100px;top:311.0px;height:14px">ו׳‏<span class="mk">¶</span></div>
<div class="cl" style="left:514.8px;width:100px;top:325.4px;height:14px">1<span class="sp">·</span>ספטמבר‏<span class="mk">¶</span></div>
<div class="cl" style="left:514.8px;width:100px;top:339.8px;height:14px">מוצאי<span class="sp">·</span>שבת:<span class="sp">·</span>19:43‏<span class="mk">¶</span></div>
<div class="cl" style="left:514.8px;width:100px;top:354.2px;height:14px">שופטים‏<span class="mk">#</span></div>
<div class="cl" style="left:1157.7px;width:100px;top:396.0px;height:14px">ז׳‏<span class="mk">¶</span></div>
<div class="cl" style="left:1157.7px;width:100px;top:410.4px;height:14px">2<span class="sp">·</span>ספטמבר‏<span class="mk">#</span></div>
<div class="cl" style="left:1050.6px;width:100px;top:396.0px;height:14px">ח׳‏<span class="mk">¶</span></div>
<div class="cl" style="left:1050.6px;width:100px;top:410.4px;height:14px">3<span class="sp">·</span>ספטמבר‏<span class="mk">#</span></div>
<div class="cl" style="left:943.4px;width:100px;top:396.0px;height:14px">ט׳‏<span class="mk">¶</span></div>
<div class="cl" style="left:943.4px;width:100px;top:410.4px;height:14px">4<span class="sp">·</span>ספטמבר‏<span class="mk">#</span></div>
<div class="cl" style="left:836.3px;width:100px;top:396.0px;height:14px">י׳‏<span class="mk">¶</span></div>
<div class="cl" style="left:836.3px;width:100px;top:410.4px;height:14px">5<span class="sp">·</span>ספטמבר‏<span class="mk">#</span></div>
<div class="cl" style="left:729.1px;width:100px;top:396.0px;height:14px">י״א‏<span class="mk">¶</span></div>
<div class="cl" style="left:729.1px;width:100px;top:410.4px;height:14px">6<span class="sp">·</span>ספטמבר‏<span class="mk">#</span></div>
<div class="cl" style="left:622.0px;width:100px;top:396.0px;height:14px">י״ב‏<span class="mk">¶</span></div>
<div class="cl" style="left:622.0px;width:100px;top:410.4px;height:14px">7<span class="sp">·</span>ספטמבר‏<span class="mk">¶</span></div>
<div class="cl" style="left:622.0px;width:100px;top:424.8px;height:14px">כניסת<span class="sp">·</span>שבת:<span class="sp">·</span>18:27‏<span class="mk">#</span></div>
<div class="cl" style="left:514.8px;width:100px;top:396.0px;height:14px">י״ג‏<span class="mk">¶</span></div>
<div class="cl" style="left:514.8px;width:100px;top:410.4px;height:14px">8<span class="sp">·</span>ספטמבר‏<span class="mk">¶</span></div>
<div class="cl" style="left:514.8px;width:100px;top:424.8px;height:14px">מוצאי<span class="sp">·</span>שבת:<span class="sp">·</span>19:33‏<span class="mk">¶</span></div>
<div class="cl" style="left:514.8px;width:100px;top:439.2px;height:14px">כי<span class="sp">·</span>תצא‏<span class="mk">#</span></div>
<div class="cl" style="left:1157.7px;width:100px;top:481.0px;height:14px">י״ד‏<span class="mk">¶</span></div>
<div class="cl" style="left:1157.7px;width:100px;top:495.4px;height:14px">9<span class="sp">·</span>ספטמבר‏<span class="mk">#</span></div>
<div class="cl" style="left:1050.6px;width:100px;top:481.0px;height:14px">ט״ו‏<span class="mk">¶</span></div>
<div class="cl" style="left:1050.6px;width:100px;top:495.4px;height:14px">10<span class="sp">·</span>ספטמבר‏<span class="mk">#</span></div>
<div class="cl" style="left:943.4px;width:100px;top:481.0px;height:14px">ט״ז‏<span class="mk">¶</span></div>
<div class="cl" style="left:943.4px;width:100px;top:495.4px;height:14px">11<span class="sp">·</span>ספטמבר‏<span class="mk">#</span></div>
<div class="cl" style="left:836.3px;width:100px;top:481.0px;height:14px">י״ז‏<span class="mk">¶</span></div>
<div class="cl" style="left:836.3px;width:100px;top:495.4px;height:14px">12<span class="sp">·</span>ספטמבר‏<span class="mk">#</span></div>
<div class="cl" style="left:729.1px;width:100px;top:481.0px;height:14px">י״ח‏<span class="mk">¶</span></div>
<div class="cl" style="left:729.1px;width:100px;top:495.4px;height:14px">13<span class="sp">·</span>ספטמבר‏<span class="mk">#</span></div>
<div class="cl" style="left:622.0px;width:100px;top:481.0px;height:14px">י״ט‏<span class="mk">¶</span></div>
<div class="cl" style="left:622.0px;width:100px;top:495.4px;height:14px">14<span class="sp">·</span>ספטמבר‏<span class="mk">¶</span></div>
<div class="cl" style="left:622.0px;width:100px;top:509.8px;height:14px">כניסת<span class="sp">·</span>שבת:<span class="sp">·</span>18:18‏<span class="mk">#</span></div>
<div class="cl" style="left:514.8px;width:100px;top:481.0px;height:14px">כ׳‏<span class="mk">¶</span></div>
<div class="cl" style="left:514.8px;width:100px;top:495.4px;height:14px">15<span class="sp">·</span>ספטמבר‏<span class="mk">¶</span></div>
<div class="cl" style="left:514.8px;width:100px;top:509.8px;height:14px">מוצאי<span class="sp">·</span>שבת:<span class="sp">·</span>19:24‏<span class="mk">¶</span></div>
<div class="cl" style="left:514.8px;width:100px;top:524.2px;height:14px">כי<span class="sp">·</span>תצא‏<span class="mk">#</span></div>
<div class="cl" style="left:1157.7px;width:100px;top:567.0px;height:14px">כ״א‏<span class="mk">¶</span></div>
<div class="cl" style="left:1157.7px;width:100px;top:581.4px;height:14px">16<span class="sp">·</span>ספטמבר‏<span class="mk">#</span></div>
<div class="cl" style="left:1050.6px;width:100px;top:567.0px;height:14px">כ״ב‏<span class="mk">¶</span></div>
<div class="cl" style="left:1050.6px;width:100px;top:581.4px;height:14px">17<span class="sp">·</span>ספטמבר‏<span class="mk">#</span></div>
<div class="cl" style="left:943.4px;width:100px;top:567.0px;height:14px">כ״ג‏<span class="mk">¶</span></div>
<div class="cl" style="left:943.4px;width:100px;top:581.4px;height:14px">18<span class="sp">·</span>ספטמבר‏<span class="mk">#</span></div>
<div class="cl" style="left:836.3px;width:100px;top:567.0px;height:14px">כ״ד‏<span class="mk">¶</span></div>
<div class="cl" style="left:836.3px;width:100px;top:581.4px;height:14px">19<span class="sp">·</span>ספטמבר‏<span class="mk">#</span></div>
<div class="cl" style="left:729.1px;width:100px;top:567.0px;height:14px">כ״ה‏<span class="mk">¶</span></div>
<div class="cl" style="left:729.1px;width:100px;top:581.4px;height:14px">20<span class="sp">·</span>ספטמבר‏<span class="mk">#</span></div>
<div class="cl" style="left:622.0px;width:100px;top:567.0px;height:14px">כ״ו‏<span class="mk">¶</span></div>
<div class="cl" style="left:622.0px;width:100px;top:581.4px;height:14px">21<span class="sp">·</span>ספטמבר‏<span class="mk">¶</span></div>
<div class="cl" style="left:622.0px;width:100px;top:595.8px;height:14px">כניסת<span class="sp">·</span>שבת:<span class="sp">·</span>18:09‏<span class="mk">#</span></div>
<div class="cl" style="left:514.8px;width:100px;top:567.0px;height:14px">כ״ז‏<span class="mk">¶</span></div>
<div class="cl" style="left:514.8px;width:100px;top:581.4px;height:14px">22<span class="sp">·</span>ספטמבר‏<span class="mk">¶</span></div>
<div class="cl" style="left:514.8px;width:100px;top:595.8px;height:14px">מוצאי<span class="sp">·</span>שבת:<span class="sp">·</span>19:14‏<span class="mk">¶</span></div>
<div class="cl" style="left:514.8px;width:100px;top:610.2px;height:14px">ניצבים‏<span class="mk">#</span></div>
<div class="cl" style="left:1157.7px;width:100px;top:652.0px;height:14px">כ״ח‏<span class="mk">¶</span></div>
<div class="cl" style="left:1157.7px;width:100px;top:666.4px;height:14px">23<span class="sp">·</span>ספטמבר‏<span class="mk">#</span></div>
<div class="cl" style="left:1050.6px;width:100px;top:652.0px;height:14px">כ״ט‏<span class="mk">¶</span></div>
<div class="cl" style="left:1050.6px;width:100px;top:666.4px;height:14px">24<span class="sp">·</span>ספטמבר‏<span class="mk">¶</span></div>
<div class="cl" style="left:1050.6px;width:100px;top:680.8px;height:14px">כניסת<span class="sp">·</span>החג:<span class="sp">·</span>18:05‏<span class="mk">¶</span></div>
<div class="cl" style="left:1050.6px;width:100px;top:695.2px;height:14px">ערב<span class="sp">·</span>ראש<span class="sp">·</span>השנה‏<span class="mk">#</span></div>
<div class="cl" style="left:943.4px;width:100px;top:652.0px;height:14px">א׳‏<span class="mk">¶</span></div>
<div class="cl" style="left:943.4px;width:100px;top:666.4px;height:14px">25<span class="sp">·</span>ספטמבר‏<span class="mk">¶</span></div>
<div class="cl" style="left:943.4px;width:100px;top:680.8px;height:14px">ראש<span class="sp">·</span>השנה‏<span class="mk">#</span></div>
<div class="cl" style="left:836.3px;width:100px;top:652.0px;height:14px">ב׳‏<span class="mk">¶</span></div>
<div class="cl" style="left:836.3px;width:100px;top:666.4px;height:14px">26<span class="sp">·</span>ספטמבר‏<span class="mk">¶</span></div>
<div class="cl" style="left:836.3px;width:100px;top:680.8px;height:14px">צאת<span class="sp">·</span>החג:<span class="sp">·</span>18:09‏<span class="mk">¶</span></div>
<div class="cl" style="left:836.3px;width:100px;top:695.2px;height:14px">ראש<span class="sp">·</span>השנה‏<span class="mk">#</span></div>
<div class="cl" style="left:729.1px;width:100px;top:652.0px;height:14px">ג׳‏<span class="mk">¶</span></div>
<div class="cl" style="left:729.1px;width:100px;top:666.4px;height:14px">27<span class="sp">·</span>ספטמבר‏<span class="mk">¶</span></div>
<div class="cl" style="left:729.1px;width:100px;top:680.8px;height:14px">צום<span class="sp">·</span>גדליה‏<span class="mk">#</span></div>
<div class="cl" style="left:622.0px;width:100px;top:652.0px;height:14px">ד׳‏<span class="mk">¶</span></div>
<div class="cl" style="left:622.0px;width:100px;top:666.4px;height:14px">28<span class="sp">·</span>ספטמבר‏<span class="mk">¶</span></div>
<div class="cl" style="left:622.0px;width:100px;top:680.8px;height:14px">כניסת<span class="sp">·</span>שבת:<span class="sp">·</span>17:00‏<span class="mk">#</span></div>
<div class="cl" style="left:514.8px;width:100px;top:652.0px;height:14px">ה׳‏<span class="mk">¶</span></div>
<div class="cl" style="left:514.8px;width:100px;top:666.4px;height:14px">29<span class="sp">·</span>ספטמבר‏<span class="mk">¶</span></div>
<div class="cl" style="left:514.8px;width:100px;top:680.8px;height:14px">מוצאי<span class="sp">·</span>שבת:<span class="sp">·</span>18:05‏<span class="mk">¶</span></div>
<div class="cl" style="left:514.8px;width:100px;top:695.2px;height:14px">וילך<span class="sp">·</span>שבת<span class="sp">·</span>תשובה‏<span class="mk">#</span></div>
<div style="left:502px;top:284px;width:771px;height:524px;border-top:1px solid #ff4bff;border-bottom:1px solid #ff4bff;border-left:1px solid #a340ff;border-right:1px solid #a340ff"></div>
<div style="left:512px;top:285px;width:751px;height:538px;border:1px solid #5b9cf5;border-top:none"></div>
<svg style="position:absolute;left:0px;top:0px;" width="1" height="1" viewBox="0 0 1 1"><path d="M1261,749 h4.5 M1263.5,745 l-1.2,5.5" stroke="#5b9cf5" stroke-width="1.4" fill="none"/><path d="M1263.2,746.2 h3" stroke="#9fd0ff" stroke-width="1"/></svg>
<svg style="position:absolute;left:0px;top:0px;" width="1" height="1" viewBox="0 0 1 1"><rect x="1" y="73" width="1" height="4" fill="#2e2e2e"/><rect x="3" y="73" width="1" height="4" fill="#2e2e2e"/><rect x="5" y="73" width="1" height="4" fill="#2e2e2e"/><rect x="7" y="73" width="1" height="4" fill="#2e2e2e"/><rect x="9" y="73" width="1" height="4" fill="#2e2e2e"/><rect x="11" y="73" width="1" height="4" fill="#2e2e2e"/><rect x="13" y="73" width="1" height="4" fill="#2e2e2e"/><rect x="15" y="73" width="1" height="4" fill="#2e2e2e"/><rect x="17" y="73" width="1" height="4" fill="#2e2e2e"/><rect x="19" y="73" width="1" height="4" fill="#2e2e2e"/><rect x="21" y="73" width="1" height="4" fill="#2e2e2e"/><path d="M3.5,88.5 L14.5,97 L9,97.5 L3.5,104 z" fill="none" stroke="#c8c8c8" stroke-width="1.2"/><path d="M3,111.5 L15,120.5 L9,121 L3,128.5 z" fill="#c8c8c8"/><path d="M10,149.5 H2.5 V136.5 H9.5 L13.5,140.5 V143 M9.5,136.5 V141 H13.5" fill="none" stroke="#c8c8c8" stroke-width="1.1"/><path d="M11,143 L17,148.2 L11.5,151.8 z" fill="#c8c8c8"/><rect x="0" y="161" width="1.2" height="14" fill="#c8c8c8"/><rect x="15" y="161" width="1.8" height="14" fill="#c8c8c8"/><path d="M3.5,167.5 H12.5" stroke="#c8c8c8" stroke-width="1.2"/><path d="M1.6,167.5 l3.2,-3 v6 z M14.4,167.5 l-3.2,-3 v6 z" fill="#c8c8c8"/><path d="M1.8,189.5 v9.8 h12.4 v-9.8" fill="none" stroke="#c8c8c8" stroke-width="1.6"/><path d="M3.2,184.2 L7.6,188.6" stroke="#c8c8c8" stroke-width="1.4"/><path d="M9,190 v-4.5 l-4.5,4.5 z" fill="#c8c8c8"/><rect x="4" y="191.8" width="2" height="2" fill="#c8c8c8"/><rect x="10" y="191.8" width="2" height="2" fill="#c8c8c8"/><rect x="4" y="194.8" width="2" height="2" fill="#c8c8c8"/><rect x="7" y="194.8" width="2" height="2" fill="#c8c8c8"/><rect x="10" y="194.8" width="2" height="2" fill="#c8c8c8"/><path d="M18,202 h3.5 v-3.5 z" fill="#c8c8c8"/><rect x="0" y="205" width="27" height="1" fill="#4a4a4a"/></svg>
<div style="left:0px;top:208px;width:22px;height:21px;background:#2f2f2f;border-radius:0 3px 3px 0"></div>
<svg style="position:absolute;left:0px;top:0px;" width="1" height="1" viewBox="0 0 1 1"><path d="M2,211 H14 V214.6 H12.6 V213 H9.1 V221 H11.2 V223 H4.8 V221 H6.9 V213 H3.4 V214.6 H2 z" fill="#c8c8c8"/><path d="M1.5,224.6 h13.5" stroke="#c8c8c8" stroke-width="1.1"/><path d="M0,224.6 l3,-2.2 v4.4 z" fill="#c8c8c8"/><path d="M18,229 h3.5 v-3.5 z" fill="#c8c8c8"/><path d="M1,249.5 L15,236" stroke="#c8c8c8" stroke-width="1.3"/><path d="M11,259 L16,264 L13.5,266.5 L8.5,261.5 z" fill="#c8c8c8"/><path d="M8,262.3 L13,267.3 L10.5,271.5 L1.5,275.2 L0,273.8 L3.3,265.5 z" fill="#c8c8c8"/><path d="M5.8,269 L1.2,273.8" stroke="#535353" stroke-width="0.9"/><path d="M18,277 h3 v-3.5 z" fill="#c8c8c8"/><path d="M12.5,283 L16,286.5 L13.5,289 L10,285.5 z" fill="#c8c8c8"/><path d="M9.5,286.3 L13.2,290 L5,298.2 L0,299.6 L1.3,294.5 z" fill="#c8c8c8"/><path d="M1.8,295.8 L3.8,297.8 L1,298.6 z" fill="#535353"/><path d="M18,301 h3 v-3.5 z" fill="#c8c8c8"/><rect x="1" y="308.5" width="14" height="13" fill="none" stroke="#c8c8c8" stroke-width="1.2"/><path d="M1,308.5 L15,321.5 M15,308.5 L1,321.5" stroke="#c8c8c8" stroke-width="1"/><path d="M19,323 h3 v-3 z" fill="#c8c8c8"/><path d="M4.5,328 h8 l3.5,8 l-3.5,8 h-8 l-3.5,-8 z" fill="#777" stroke="#c8c8c8" stroke-width="1"/><path d="M19,347 h3 v-3 z" fill="#c8c8c8"/><rect x="0" y="352" width="27" height="1" fill="#4a4a4a"/><circle cx="14" cy="361" r="2.7" fill="none" stroke="#c8c8c8" stroke-width="1.1"/><circle cx="14" cy="371" r="2.7" fill="none" stroke="#c8c8c8" stroke-width="1.1"/><path d="M0,361.5 L9,366 L12,363 M0,370.5 L9,366 L12,369" stroke="#c8c8c8" stroke-width="1.8" fill="none"/><path d="M0,382 l8,7.5 l-8,7.5 z" fill="#c8c8c8"/><rect x="5.5" y="384.5" width="11.5" height="12" fill="none" stroke="#c8c8c8" stroke-width="0.9"/><rect x="4.5" y="383.5" width="2" height="2" fill="#c8c8c8"/><rect x="10" y="383.5" width="2" height="2" fill="#c8c8c8"/><rect x="16" y="383.5" width="2" height="2" fill="#c8c8c8"/><rect x="16" y="389.5" width="2" height="2" fill="#c8c8c8"/><rect x="16" y="395.5" width="2" height="2" fill="#c8c8c8"/><rect x="10" y="395.5" width="2" height="2" fill="#c8c8c8"/><rect x="4.5" y="395.5" width="2" height="2" fill="#c8c8c8"/><path d="M19,400 h3 v-3 z" fill="#c8c8c8"/><defs><linearGradient id="gr" x1="0" x2="1"><stop offset="0" stop-color="#e0e0e0"/><stop offset="1" stop-color="#555"/></linearGradient><linearGradient id="gf" x1="0" x2="0" y1="0" y2="1"><stop offset="0" stop-color="#555"/><stop offset="1" stop-color="#ddd"/></linearGradient></defs><rect x="0.5" y="407.5" width="15" height="13" fill="url(#gr)" stroke="#c8c8c8" stroke-width="1"/><rect x="0.5" y="431.5" width="15" height="13" fill="url(#gf)" stroke="#c8c8c8" stroke-width="1"/><rect x="0" y="451" width="27" height="1" fill="#4a4a4a"/><path d="M1,458 h14 v9 l-5,5 h-9 z" fill="#c8c8c8"/><path d="M3,461 h9 M3,464 h9 M3,467 h5" stroke="#535353" stroke-width="1"/><path d="M10,472 l5,-5 h-5 z" fill="#535353"/><path d="M11.2,482 a2.6,2.6 0 0 1 4.2,4.2 l-2.6,2.6 l-4.2,-4.2 z" fill="#c8c8c8"/><path d="M8,484.5 L13.8,490.3" stroke="#c8c8c8" stroke-width="1.6"/><path d="M10,488.5 L11.8,490.3 L2.2,497.6 L0.6,496 z" fill="none" stroke="#c8c8c8" stroke-width="1"/><rect x="8.5" y="493.5" width="10" height="4" fill="none" stroke="#c8c8c8" stroke-width="0.9"/><rect x="9.8" y="494.7" width="1.7" height="1.7" fill="#c8c8c8"/><rect x="12.6" y="494.7" width="1.7" height="1.7" fill="#c8c8c8"/><rect x="15.4" y="494.7" width="1.7" height="1.7" fill="#c8c8c8"/><path d="M19,499 h3 v-3 z" fill="#c8c8c8"/><rect x="3.5" y="507.5" width="2.1" height="8" rx="1" fill="#c8c8c8"/><rect x="6.1" y="505.3" width="2.1" height="10" rx="1" fill="#c8c8c8"/><rect x="8.7" y="505.8" width="2.1" height="9.5" rx="1" fill="#c8c8c8"/><rect x="11.2" y="508" width="2.1" height="7.5" rx="1" fill="#c8c8c8"/><path d="M3,513 h10.5 l2.2,-2.6 a1,1 0 0 1 1.6,1.1 l-2.8,5 q-2,4.6 -5.6,4.6 h-1.2 q-3.6,0 -5,-3.8 l-2.4,-3.3 a1,1 0 0 1 1.5,-1.2 z" fill="#c8c8c8"/><circle cx="7" cy="535" r="5.5" fill="none" stroke="#c8c8c8" stroke-width="1.4"/><path d="M11,539 l5,5.5" stroke="#c8c8c8" stroke-width="2"/><rect x="0" y="551" width="27" height="1" fill="#4a4a4a"/><rect x="-2" y="555.5" width="6" height="9" fill="none" stroke="#aaa"/><rect x="-3" y="553.5" width="4.5" height="5" fill="#333" stroke="#c8c8c8" stroke-width="0.8"/><path d="M14,560.5 h4 q2,0 2,2 v4" stroke="#c8c8c8" stroke-width="1.2" fill="none"/><path d="M13,560.5 l3,-2.5 v5 z M20,568.5 l-2.5,-3 h5 z" fill="#c8c8c8"/></svg>
<div style="left:3px;top:581px;width:18px;height:18px;background:#fff;border:1px solid #c8c8c8"></div>
<svg style="position:absolute;left:0px;top:0px;" width="1" height="1" viewBox="0 0 1 1"><path d="M9,593 v3.5 M7,596.5 h5 M14,583 v8" stroke="#b8c4b8" stroke-width="1.4"/><path d="M3.5,598.5 L20.5,581.5" stroke="#000" stroke-width="2"/></svg>
<div style="left:-1px;top:571px;width:14.5px;height:20.5px;background:#fff;border:1px solid #c8c8c8"></div>
<svg style="position:absolute;left:0px;top:0px;" width="1" height="1" viewBox="0 0 1 1"><path d="M-1,574 H10.5 V579 H9 V577 H7.6 V587 H10 V589.6 H1.2 V587 H3.8 V577 H-1 z" fill="#000"/></svg>
<div style="left:-2px;top:611px;width:6px;height:7px;background:#777;border:1px solid #999"></div>
<div style="left:10px;top:608px;width:13px;height:12px;background:#2f2f2f;border-radius:3px"></div>
<svg style="position:absolute;left:0px;top:0px;" width="1" height="1" viewBox="0 0 1 1"><path d="M12.5,610 H21.5 V613 H20.5 V611.8 H18 V617.2 H19.6 V618.8 H14.4 V617.2 H16 V611.8 H13.5 V613 H12.5 z" fill="#c8c8c8"/></svg>
<div style="left:0px;top:627px;width:22px;height:21px;background:#2f2f2f;border-radius:0 3px 3px 0"></div>
<div style="left:1px;top:631px;width:14px;height:13px;background:#000;border:1px solid #aaa"></div>
<svg style="position:absolute;left:0px;top:0px;" width="1" height="1" viewBox="0 0 1 1"><path d="M19,647 h3 v-3 z" fill="#c8c8c8"/><rect x="0" y="652" width="27" height="1" fill="#4a4a4a"/><rect x="1" y="665" width="3" height="1" fill="#c8c8c8"/><rect x="1" y="669" width="3" height="1" fill="#c8c8c8"/><rect x="5" y="665" width="10" height="8" fill="#c8c8c8"/><path d="M6,661 v2 M9,661 v2 M12,661 v2" stroke="#c8c8c8"/><path d="M19,675 h3 v-3 z" fill="#c8c8c8"/><rect x="0" y="680" width="27" height="1" fill="#4d4d4d"/></svg>
<div style="left:0px;top:683px;width:22px;height:21px;background:#2f2f2f;border-radius:0 3px 3px 0"></div>
<svg style="position:absolute;left:0px;top:0px;" width="1" height="1" viewBox="0 0 1 1"><rect x="3.5" y="689.5" width="10" height="9" fill="none" stroke="#c8c8c8"/><rect x="5.5" y="691.5" width="5" height="4" fill="none" stroke="#c8c8c8" stroke-width="0.9"/><rect x="7.5" y="693.5" width="4" height="3" fill="none" stroke="#c8c8c8" stroke-width="0.9"/><path d="M19,703 h3 v-3 z" fill="#c8c8c8"/></svg>
<div style="left:130px;top:291px;width:242px;height:236px;background:#535353;border:1px solid #383838;border-radius:4px 4px 0 0"></div>
<div style="left:131px;top:292px;width:240px;height:13px;background:#404040;border-radius:3px 3px 0 0"></div>
<div style="left:131px;top:304px;width:240px;height:1px;background:#383838"></div>
<div style="left:131px;top:305px;width:240px;height:27px;background:#434343"></div>
<div style="left:189px;top:305px;width:91px;height:27px;background:#535353"></div>
<div style="left:331px;top:305px;width:1px;height:27px;background:#383838"></div>
<div class="t" style="left:143px;top:311px;font-size:10.8px;line-height:15px;color:#bfbfbf;width:45px;overflow:hidden">Script La</div>
<div class="t" style="left:206px;top:311px;font-size:10.8px;line-height:15px;color:#ffffff;font-weight:bold">Data Merge</div>
<div class="t" style="left:292px;top:311px;font-size:10.8px;line-height:15px;color:#bfbfbf;">Scripts</div>
<svg style="position:absolute;left:0px;top:0px;" width="1" height="1" viewBox="0 0 1 1"><polyline points="196,317.5 198.5,314.5 201,317.5" fill="none" stroke="#c0c0c0" stroke-width="1"/><polyline points="196,320.5 198.5,323.5 201,320.5" fill="none" stroke="#c0c0c0" stroke-width="1"/><rect x="355" y="315" width="10" height="1" fill="#c8c8c8"/><rect x="355" y="317" width="10" height="1" fill="#c8c8c8"/><rect x="355" y="319" width="10" height="1" fill="#c8c8c8"/><rect x="355" y="321" width="10" height="1" fill="#c8c8c8"/><path d="M343,296 l-2.5,2.5 l2.5,2.5 M347,296 l-2.5,2.5 l2.5,2.5" stroke="#d0d0d0" stroke-width="1.3" fill="none"/><path d="M360,295.5 l6,6 M366,295.5 l-6,6" stroke="#d0d0d0" stroke-width="1.8"/><path d="M344,346.5 h8 M349.5,344 l2.5,2.5 l-2.5,2.5" stroke="#a8a8a8" stroke-width="1.3" fill="none"/><rect x="351.5" y="340.5" width="7" height="10" fill="none" stroke="#a8a8a8"/><rect x="353.5" y="343" width="1.5" height="1.5" fill="#a8a8a8"/><rect x="353.5" y="347" width="1.5" height="1.5" fill="#a8a8a8"/><rect x="356" y="343" width="1.5" height="1.5" fill="#a8a8a8"/><rect x="356" y="347" width="1.5" height="1.5" fill="#a8a8a8"/></svg>
<div style="left:131px;top:356px;width:240px;height:137px;background:#4b4b4b"></div>
<div style="left:137px;top:358px;width:228px;height:134px;background:#ffffff;border-radius:3px 3px 0 0"></div>
<div style="left:347px;top:358px;width:17px;height:134px;background:#efefef"></div>
<svg style="position:absolute;left:0px;top:0px;" width="1" height="1" viewBox="0 0 1 1"><polyline points="351.5,369.5 355.5,365.5 359.5,369.5" fill="none" stroke="#9a9a9a" stroke-width="1"/><polyline points="351.5,482.0 355.5,486.0 359.5,482.0" fill="none" stroke="#9a9a9a" stroke-width="1"/></svg>
<div class="r" style="left:141px;top:359px;font-size:9.9px;line-height:12px;color:#1a1a1a;">1. Choose Select Data Source from the panel</div>
<div class="r" style="left:141px;top:371px;font-size:9.9px;line-height:12px;color:#1a1a1a;">menu.</div>
<div class="r" style="left:141px;top:383px;font-size:9.9px;line-height:12px;color:#1a1a1a;">2. Drag data fields from the panel to frames</div>
<div class="r" style="left:141px;top:395px;font-size:9.9px;line-height:12px;color:#1a1a1a;">on the page (or, with an insertion point</div>
<div class="r" style="left:141px;top:407px;font-size:9.9px;line-height:12px;color:#1a1a1a;">selected, click the data fields you want to</div>
<div class="r" style="left:141px;top:419px;font-size:9.9px;line-height:12px;color:#1a1a1a;">insert).</div>
<div class="r" style="left:141px;top:431px;font-size:9.9px;line-height:12px;color:#1a1a1a;">3. Choose Create Merged Document from the</div>
<div class="r" style="left:141px;top:443px;font-size:9.9px;line-height:12px;color:#1a1a1a;">panel menu.</div>
<div style="left:131px;top:492px;width:240px;height:1px;background:#4e4e4e"></div>
<div style="left:137px;top:499px;width:12px;height:12px;border:1px solid #7a7a7a;border-radius:2px"></div>
<div class="r" style="left:155px;top:497px;font-size:9.9px;line-height:16px;color:#8a8a8a;">Preview</div>
<div style="left:282px;top:494px;width:25px;height:23px;background:#5a5a5a"></div>
<div class="t" style="left:287px;top:497px;font-size:10px;line-height:15px;color:#d8d8d8;">1</div>
<svg style="position:absolute;left:0px;top:0px;" width="1" height="1" viewBox="0 0 1 1"><rect x="242" y="502" width="1.6" height="8" fill="#9a9a9a"/><path d="M251,502 v8 l-6,-4 z" fill="#9a9a9a"/><path d="M273,502 v8 l-5.5,-4 z" fill="#9a9a9a"/><path d="M317,502 v8 l5.5,-4 z" fill="#9a9a9a"/><path d="M339,502 v8 l6,-4 z" fill="#9a9a9a"/><rect x="345.4" y="502" width="1.6" height="8" fill="#9a9a9a"/></svg>
<div style="left:131px;top:518px;width:240px;height:2px;background:#353535"></div>
<div style="left:131px;top:520px;width:240px;height:6px;background:#4f4f4f"></div>
<svg style="position:absolute;left:0px;top:0px;" width="1" height="1" viewBox="0 0 1 1"><rect x="241" y="521" width="1" height="4" fill="#2e2e2e"/><rect x="243" y="521" width="1" height="4" fill="#2e2e2e"/><rect x="245" y="521" width="1" height="4" fill="#2e2e2e"/><rect x="247" y="521" width="1" height="4" fill="#2e2e2e"/><rect x="249" y="521" width="1" height="4" fill="#2e2e2e"/><rect x="251" y="521" width="1" height="4" fill="#2e2e2e"/><rect x="253" y="521" width="1" height="4" fill="#2e2e2e"/><rect x="255" y="521" width="1" height="4" fill="#2e2e2e"/><rect x="257" y="521" width="1" height="4" fill="#2e2e2e"/><rect x="259" y="521" width="1" height="4" fill="#2e2e2e"/></svg>
<div style="left:130px;top:526px;width:242px;height:1px;background:#383838"></div>
<div style="left:1525px;top:293px;width:242px;height:365px;background:#535353;border:1px solid #383838;border-radius:4px 4px 0 0"></div>
<div style="left:1526px;top:294px;width:240px;height:12px;background:#404040;border-radius:3px 3px 0 0"></div>
<div style="left:1526px;top:306px;width:240px;height:1px;background:#383838"></div>
<div style="left:1526px;top:307px;width:240px;height:27px;background:#434343"></div>
<div style="left:1526px;top:307px;width:84px;height:27px;background:#535353"></div>
<div class="t" style="left:1544px;top:314px;font-size:10.8px;line-height:15px;color:#ffffff;font-weight:bold">Paragraph</div>
<svg style="position:absolute;left:0px;top:0px;" width="1" height="1" viewBox="0 0 1 1"><polyline points="1534,319.5 1536.5,316.5 1539,319.5" fill="none" stroke="#c0c0c0" stroke-width="1"/><polyline points="1534,322.5 1536.5,325.5 1539,322.5" fill="none" stroke="#c0c0c0" stroke-width="1"/><rect x="1750" y="317" width="10" height="1" fill="#c8c8c8"/><rect x="1750" y="319" width="10" height="1" fill="#c8c8c8"/><rect x="1750" y="321" width="10" height="1" fill="#c8c8c8"/><rect x="1750" y="323" width="10" height="1" fill="#c8c8c8"/><path d="M1738,298 l-2.5,2.5 l2.5,2.5 M1742,298 l-2.5,2.5 l2.5,2.5" stroke="#d0d0d0" stroke-width="1.3" fill="none"/><path d="M1755,297.5 l6,6 M1761,297.5 l-6,6" stroke="#d0d0d0" stroke-width="1.8"/></svg>
<div style="left:1580px;top:341px;width:22px;height:22px;background:#2f2f2f;border-radius:3px"></div>
<svg style="position:absolute;left:0px;top:338px;" width="1" height="1" viewBox="0 0 1 1"><rect x="1536" y="7" width="12" height="1" fill="#c9c9c9"/><rect x="1536" y="10" width="15" height="1" fill="#c9c9c9"/><rect x="1536" y="13" width="12" height="1" fill="#c9c9c9"/><rect x="1536" y="16" width="15" height="1" fill="#c9c9c9"/><rect x="1536" y="19" width="12" height="1" fill="#c9c9c9"/><rect x="1561" y="7" width="12" height="1" fill="#c9c9c9"/><rect x="1559" y="10" width="16" height="1" fill="#c9c9c9"/><rect x="1561" y="13" width="12" height="1" fill="#c9c9c9"/><rect x="1559" y="16" width="16" height="1" fill="#c9c9c9"/><rect x="1561" y="19" width="12" height="1" fill="#c9c9c9"/><rect x="1586" y="7" width="12" height="1" fill="#c9c9c9"/><rect x="1583" y="10" width="15" height="1" fill="#c9c9c9"/><rect x="1586" y="13" width="12" height="1" fill="#c9c9c9"/><rect x="1583" y="16" width="15" height="1" fill="#c9c9c9"/><rect x="1586" y="19" width="12" height="1" fill="#c9c9c9"/><rect x="1615" y="7" width="14" height="1" fill="#c9c9c9"/><rect x="1615" y="10" width="14" height="1" fill="#c9c9c9"/><rect x="1615" y="13" width="14" height="1" fill="#c9c9c9"/><rect x="1615" y="16" width="14" height="1" fill="#c9c9c9"/><rect x="1615" y="19" width="10" height="1" fill="#c9c9c9"/><rect x="1639" y="7" width="14" height="1" fill="#c9c9c9"/><rect x="1639" y="10" width="14" height="1" fill="#c9c9c9"/><rect x="1639" y="13" width="14" height="1" fill="#c9c9c9"/><rect x="1639" y="16" width="14" height="1" fill="#c9c9c9"/><rect x="1641" y="19" width="10" height="1" fill="#c9c9c9"/><rect x="1663" y="7" width="14" height="1" fill="#c9c9c9"/><rect x="1663" y="10" width="14" height="1" fill="#c9c9c9"/><rect x="1663" y="13" width="14" height="1" fill="#c9c9c9"/><rect x="1663" y="16" width="14" height="1" fill="#c9c9c9"/><rect x="1667" y="19" width="10" height="1" fill="#c9c9c9"/><rect x="1687" y="7" width="14" height="1" fill="#c9c9c9"/><rect x="1687" y="10" width="14" height="1" fill="#c9c9c9"/><rect x="1687" y="13" width="14" height="1" fill="#c9c9c9"/><rect x="1687" y="16" width="14" height="1" fill="#c9c9c9"/><rect x="1687" y="19" width="14" height="1" fill="#c9c9c9"/><rect x="1721" y="7" width="9" height="1" fill="#c9c9c9"/><rect x="1719" y="10" width="11" height="1" fill="#c9c9c9"/><rect x="1721" y="13" width="9" height="1" fill="#c9c9c9"/><rect x="1719" y="16" width="11" height="1" fill="#c9c9c9"/><rect x="1721" y="19" width="9" height="1" fill="#c9c9c9"/><rect x="1732" y="6" width="1" height="15" fill="#c9c9c9"/><rect x="1743" y="7" width="9" height="1" fill="#c9c9c9"/><rect x="1743" y="10" width="11" height="1" fill="#c9c9c9"/><rect x="1743" y="13" width="9" height="1" fill="#c9c9c9"/><rect x="1743" y="16" width="11" height="1" fill="#c9c9c9"/><rect x="1743" y="19" width="9" height="1" fill="#c9c9c9"/><rect x="1756" y="6" width="1" height="15" fill="#c9c9c9"/></svg>
<div style="left:1556px;top:368px;width:22px;height:22px;background:#2f2f2f;border-radius:3px"></div>
<svg style="position:absolute;left:0px;top:0px;" width="1" height="1" viewBox="0 0 1 1"><path d="M1535,373 L1540,377.5 L1535,382 z" fill="#c9c9c9"/><path d="M1545.2,372 h5.8 v11.0 h-1.6 v-9.6 h-1.2 v9.6 h-1.6 v-5.4 a3.2,2.8 0 0 1 -1.4,-5.6 z" fill="#c9c9c9"/><path d="M1562.2,373 h5.8 v11.0 h-1.6 v-9.6 h-1.2 v9.6 h-1.6 v-5.4 a3.2,2.8 0 0 1 -1.4,-5.6 z" fill="#c9c9c9"/><path d="M1575,374 L1570,378.5 L1575,383 z" fill="#c9c9c9"/></svg>
<div style="left:1531px;top:396px;width:230px;height:1px;background:#4a4a4a"></div>
<div style="left:1553px;top:402px;width:120px;height:21px;background:#3f3f3f;border:1px solid #6a6a6a;border-radius:4px"></div>
<div style="left:1570px;top:403px;width:1px;height:19px;background:#6a6a6a"></div>
<svg style="position:absolute;left:0px;top:0px;" width="1" height="1" viewBox="0 0 1 1"><polyline points="1557.5,410.0 1561.5,406.0 1565.5,410.0" fill="none" stroke="#c9c9c9" stroke-width="1"/><polyline points="1557.5,415.0 1561.5,419.0 1565.5,415.0" fill="none" stroke="#c9c9c9" stroke-width="1"/></svg>
<div class="t" style="left:1575px;top:406px;font-size:10.3px;line-height:15px;color:#ececec;">0 mm</div>
<div style="left:1553px;top:428px;width:120px;height:21px;background:#3f3f3f;border:1px solid #6a6a6a;border-radius:4px"></div>
<div style="left:1570px;top:429px;width:1px;height:19px;background:#6a6a6a"></div>
<svg style="position:absolute;left:0px;top:0px;" width="1" height="1" viewBox="0 0 1 1"><polyline points="1557.5,436.0 1561.5,432.0 1565.5,436.0" fill="none" stroke="#c9c9c9" stroke-width="1"/><polyline points="1557.5,441.0 1561.5,445.0 1565.5,441.0" fill="none" stroke="#c9c9c9" stroke-width="1"/></svg>
<div class="t" style="left:1575px;top:432px;font-size:10.3px;line-height:15px;color:#ececec;">0 mm</div>
<div style="left:1531px;top:454px;width:230px;height:1px;background:#4a4a4a"></div>
<div style="left:1553px;top:460px;width:120px;height:21px;background:#3f3f3f;border:1px solid #6a6a6a;border-radius:4px"></div>
<div style="left:1570px;top:461px;width:1px;height:19px;background:#6a6a6a"></div>
<svg style="position:absolute;left:0px;top:0px;" width="1" height="1" viewBox="0 0 1 1"><polyline points="1557.5,468.0 1561.5,464.0 1565.5,468.0" fill="none" stroke="#c9c9c9" stroke-width="1"/><polyline points="1557.5,473.0 1561.5,477.0 1565.5,473.0" fill="none" stroke="#c9c9c9" stroke-width="1"/></svg>
<div class="t" style="left:1575px;top:464px;font-size:10.3px;line-height:15px;color:#ececec;">0 mm</div>
<div style="left:1553px;top:486px;width:120px;height:21px;background:#3f3f3f;border:1px solid #6a6a6a;border-radius:4px"></div>
<div style="left:1554px;top:487px;width:16px;height:19px;background:#4d4d4d;border-radius:3px 0 0 3px"></div>
<div style="left:1570px;top:487px;width:1px;height:19px;background:#6a6a6a"></div>
<svg style="position:absolute;left:0px;top:0px;" width="1" height="1" viewBox="0 0 1 1"><polyline points="1557.5,494.0 1561.5,490.0 1565.5,494.0" fill="none" stroke="#8a8a8a" stroke-width="1"/><polyline points="1557.5,499.0 1561.5,503.0 1565.5,499.0" fill="none" stroke="#8a8a8a" stroke-width="1"/></svg>
<div class="t" style="left:1575px;top:490px;font-size:10.3px;line-height:15px;color:#ececec;">Ignore</div>
<div style="left:1622px;top:487px;width:1px;height:19px;background:#6a6a6a"></div>
<div style="left:1531px;top:512px;width:230px;height:1px;background:#4a4a4a"></div>
<div style="left:1553px;top:518px;width:120px;height:21px;background:#3f3f3f;border:1px solid #6a6a6a;border-radius:4px"></div>
<div style="left:1570px;top:519px;width:1px;height:19px;background:#6a6a6a"></div>
<svg style="position:absolute;left:0px;top:0px;" width="1" height="1" viewBox="0 0 1 1"><polyline points="1557.5,526.0 1561.5,522.0 1565.5,526.0" fill="none" stroke="#c9c9c9" stroke-width="1"/><polyline points="1557.5,531.0 1561.5,535.0 1565.5,531.0" fill="none" stroke="#c9c9c9" stroke-width="1"/></svg>
<div class="t" style="left:1575px;top:522px;font-size:10.3px;line-height:15px;color:#ececec;">0</div>
<svg style="position:absolute;left:0px;top:0px;" width="1" height="1" viewBox="0 0 1 1"><path d="M1532,412.5 h6 M1536,410 l2.5,2.5 l-2.5,2.5" stroke="#c9c9c9" stroke-width="1.2" fill="none"/><rect x="1539" y="405" width="1" height="15" fill="#c9c9c9"/><rect x="1541" y="406" width="7" height="1" fill="#c9c9c9"/><rect x="1541" y="409" width="7" height="1" fill="#c9c9c9"/><rect x="1541" y="412" width="7" height="1" fill="#c9c9c9"/><rect x="1541" y="415" width="7" height="1" fill="#c9c9c9"/><rect x="1541" y="418" width="7" height="1" fill="#c9c9c9"/><path d="M1532,432.5 h6 M1536,430 l2.5,2.5 l-2.5,2.5" stroke="#c9c9c9" stroke-width="1.2" fill="none"/><rect x="1542" y="432" width="6" height="1" fill="#c9c9c9"/><rect x="1540" y="435" width="8" height="1" fill="#c9c9c9"/><rect x="1540" y="438" width="8" height="1" fill="#c9c9c9"/><rect x="1540" y="441" width="8" height="1" fill="#c9c9c9"/><rect x="1540" y="444" width="8" height="1" fill="#c9c9c9"/><path d="M1532,466.5 h6 M1536,464 l2.5,2.5 l-2.5,2.5" stroke="#c9c9c9" stroke-width="1.2" fill="none"/><rect x="1539.5" y="464.5" width="8" height="4" fill="none" stroke="#c9c9c9"/><rect x="1539" y="471" width="9" height="1" fill="#c9c9c9"/><rect x="1539" y="474" width="9" height="1" fill="#c9c9c9"/><rect x="1539" y="477" width="9" height="1" fill="#c9c9c9"/><rect x="1539" y="490" width="9" height="1" fill="#c9c9c9"/><rect x="1539" y="493" width="9" height="1" fill="#c9c9c9"/><path d="M1532,498.5 h6 M1536,496 l2.5,2.5 l-2.5,2.5" stroke="#c9c9c9" stroke-width="1.2" fill="none"/><rect x="1539.5" y="496.5" width="8" height="4" fill="none" stroke="#c9c9c9"/><rect x="1539" y="503" width="9" height="1" fill="#c9c9c9"/><path d="M1533,522 v7 M1531.5,523.5 l1.5,-1.5 l1.5,1.5 M1531.5,527.5 l1.5,1.5 l1.5,-1.5" stroke="#c9c9c9" stroke-width="1" fill="none"/><text x="1535" y="529" font-family="Liberation Sans" font-size="9.5" fill="#c9c9c9">A</text><rect x="1542" y="522" width="5" height="1" fill="#c9c9c9"/><rect x="1542" y="525" width="5" height="1" fill="#c9c9c9"/><rect x="1542" y="528" width="5" height="1" fill="#c9c9c9"/><rect x="1535" y="531" width="12" height="1" fill="#c9c9c9"/><rect x="1535" y="534" width="12" height="1" fill="#c9c9c9"/></svg>
<div style="left:1531px;top:544px;width:230px;height:1px;background:#4a4a4a"></div>
<div style="left:1532px;top:560px;width:12px;height:12px;border:1px solid #c0c0c0;border-radius:2px"></div>
<div class="t" style="left:1550px;top:558px;font-size:10.5px;line-height:16px;color:#e0e0e0;">Shading</div>
<div style="left:1532px;top:593px;width:12px;height:12px;border:1px solid #c0c0c0;border-radius:2px"></div>
<div class="t" style="left:1550px;top:591px;font-size:10.5px;line-height:16px;color:#e0e0e0;">Border</div>
<svg style="position:absolute;left:0px;top:0px;" width="1" height="1" viewBox="0 0 1 1"><path d="M1655.5,608 V592.5 H1671" stroke="#c9c9c9" stroke-width="1" fill="none"/><path d="M1660,608 V597 H1671" stroke="#c9c9c9" stroke-width="2" fill="none"/><path d="M1665,608 V602 H1671" stroke="#c9c9c9" stroke-width="3" fill="none"/></svg>
<div style="left:1673px;top:590px;width:88px;height:19px;background:#3f3f3f;border:1px solid #5e5e5e;border-radius:4px"></div>
<div style="left:1673px;top:590px;width:69px;height:19px;background:#e6e6e6;border-radius:3px 0 0 3px"></div>
<svg style="position:absolute;left:0px;top:0px;" width="1" height="1" viewBox="0 0 1 1"><polyline points="1747.5,597.5 1751.5,601.5 1755.5,597.5" fill="none" stroke="#c9c9c9" stroke-width="1"/></svg>
<div style="left:1677px;top:594px;width:12px;height:12px;background:#3a3a3a;border:1px solid #1e1e1e"></div>
<div class="r" style="left:1692px;top:593px;font-size:10.3px;line-height:15px;color:#7f94a8;">[Black]</div>
<div style="left:1531px;top:621px;width:230px;height:1px;background:#4a4a4a"></div>
<div style="left:1532px;top:633px;width:12px;height:12px;background:#c8c8c8;border-radius:2px"></div>
<svg style="position:absolute;left:0px;top:0px;" width="1" height="1" viewBox="0 0 1 1"><polyline points="1534.5,639 1537,641.5 1541.5,636" fill="none" stroke="#3a3a3a" stroke-width="1.6"/></svg>
<div class="t" style="left:1550px;top:631px;font-size:10.5px;line-height:16px;color:#e0e0e0;">Hyphenate</div>
<div style="left:1711px;top:628px;width:22px;height:22px;background:#2f2f2f;border-radius:3px"></div>
<svg style="position:absolute;left:0px;top:0px;" width="1" height="1" viewBox="0 0 1 1"><rect x="1714" y="634" width="7" height="1" fill="#c9c9c9"/><rect x="1714" y="637" width="7" height="1" fill="#c9c9c9"/><rect x="1714" y="640" width="7" height="1" fill="#c9c9c9"/><rect x="1722" y="638" width="8" height="1" fill="#c9c9c9"/><rect x="1722" y="641" width="8" height="1" fill="#c9c9c9"/><rect x="1722" y="644" width="8" height="1" fill="#c9c9c9"/><rect x="1742" y="636" width="6" height="1" fill="#c9c9c9"/><rect x="1742" y="639" width="6" height="1" fill="#c9c9c9"/><rect x="1742" y="642" width="6" height="1" fill="#c9c9c9"/><rect x="1750" y="636" width="6" height="1" fill="#c9c9c9"/><rect x="1750" y="639" width="6" height="1" fill="#c9c9c9"/><rect x="1750" y="642" width="6" height="1" fill="#c9c9c9"/></svg>
<div style="left:1627px;top:358px;width:243px;height:221px;background:#535353;border:1px solid #383838;border-left:2px solid #383838"></div>
<div style="left:1627px;top:358px;width:243px;height:4px;background:#363636"></div>
<div style="left:1629px;top:362px;width:239px;height:26px;background:#434343"></div>
<div style="left:1629px;top:362px;width:116px;height:26px;background:#535353"></div>
<div class="t" style="left:1646px;top:368px;font-size:10.8px;line-height:15px;color:#ffffff;font-weight:bold">Paragraph Styles</div>
<svg style="position:absolute;left:0px;top:0px;" width="1" height="1" viewBox="0 0 1 1"><polyline points="1636,374 1638.5,371 1641,374" fill="none" stroke="#c0c0c0" stroke-width="1"/><polyline points="1636,377 1638.5,380 1641,377" fill="none" stroke="#c0c0c0" stroke-width="1"/><path d="M1828,373 l2.5,2.5 l-2.5,2.5 M1832,373 l2.5,2.5 l-2.5,2.5" stroke="#d0d0d0" stroke-width="1.3" fill="none"/><rect x="1844" y="370" width="1" height="11" fill="#c0c0c0"/><rect x="1852" y="372" width="10" height="1" fill="#c8c8c8"/><rect x="1852" y="374" width="10" height="1" fill="#c8c8c8"/><rect x="1852" y="376" width="10" height="1" fill="#c8c8c8"/><rect x="1852" y="378" width="10" height="1" fill="#c8c8c8"/></svg>
<div class="t" style="left:1633px;top:395px;font-size:10.5px;line-height:16px;color:#e4e4e4;">[Basic Paragraph]</div>
<div class="t" style="left:1816px;top:394px;font-size:10.5px;line-height:16px;color:#bdbdbd;">[a+]</div>
<svg style="position:absolute;left:0px;top:0px;" width="1" height="1" viewBox="0 0 1 1"><path d="M1857,396 L1851,404 L1855,404 L1850,411 L1858,402 L1854,402 z" fill="#c8c8c8"/></svg>
<div style="left:1629px;top:414px;width:238px;height:21px;background:#4c6a88"></div>
<div class="t" style="left:1663px;top:418px;font-size:10.8px;line-height:15px;color:#ffffff;font-weight:bold">[Basic Paragraph]</div>
<div style="left:1629px;top:457px;width:238px;height:1px;background:#5c5c5c"></div>
<div class="t" style="left:1663px;top:440px;font-size:10.1px;line-height:15px;color:#e8e8e8;">Normal</div>
<div style="left:1629px;top:479px;width:238px;height:1px;background:#5c5c5c"></div>
<div class="t" style="left:1663px;top:462px;font-size:11.2px;line-height:15px;color:#e8e8e8;">כניסת החג</div>
<div style="left:1629px;top:501px;width:238px;height:1px;background:#5c5c5c"></div>
<div class="t" style="left:1663px;top:484px;font-size:10.1px;line-height:15px;color:#e8e8e8;">Paragraph Style 1</div>
<div style="left:1629px;top:523px;width:238px;height:1px;background:#5c5c5c"></div>
<div class="t" style="left:1663px;top:506px;font-size:11.2px;line-height:15px;color:#e8e8e8;">לועזי</div>
<div style="left:1629px;top:545px;width:238px;height:1px;background:#5c5c5c"></div>
<div class="t" style="left:1663px;top:528px;font-size:11.2px;line-height:15px;color:#e8e8e8;">תאריך עברי</div>
<svg style="position:absolute;left:0px;top:0px;" width="1" height="1" viewBox="0 0 1 1"><path d="M1851,440 v7 M1848,444 l3,3 l3,-3" stroke="#c8c8c8" stroke-width="1.6" fill="none"/><rect x="1843" y="447" width="16" height="5" fill="#c8c8c8"/><rect x="1845" y="449" width="2" height="1.5" fill="#535353"/></svg>
<svg style="position:absolute;left:0px;top:0px;" width="1" height="1" viewBox="0 0 1 1"><rect x="1637.5" y="552.5" width="10" height="10" fill="none" stroke="#c8c8c8"/><rect x="1640.5" y="554.5" width="7" height="6" fill="none" stroke="#c8c8c8" stroke-width="0.8"/><path d="M1635,561.5 h6 M1639,559 l2.5,2.5 l-2.5,2.5" stroke="#c8c8c8" stroke-width="1.3" fill="none"/><rect x="1748" y="553" width="5" height="1" fill="#c8c8c8"/><rect x="1748" y="555" width="13" height="8" fill="#c8c8c8"/><path d="M1778.2,553 h5.8 v11.0 h-1.6 v-9.6 h-1.2 v9.6 h-1.6 v-5.4 a3.2,2.8 0 0 1 -1.4,-5.6 z" fill="#7c7c7c"/><path d="M1785,563 l6,-6 M1786,558 l4,4" stroke="#7c7c7c" stroke-width="1"/><rect x="1806.5" y="553.5" width="11" height="11" fill="none" stroke="#d0d0d0"/><path d="M1812,556 v6 M1809,559 h6" stroke="#d0d0d0" stroke-width="1.2"/><rect x="1834.5" y="555.5" width="9" height="9" fill="none" stroke="#7c7c7c"/><rect x="1833" y="554" width="12" height="1" fill="#7c7c7c"/><rect x="1837" y="552" width="4" height="1" fill="#7c7c7c"/><path d="M1837.5,557 v6 M1840.5,557 v6" stroke="#7c7c7c"/></svg>
<div style="left:1629px;top:569px;width:239px;height:2px;background:#353535"></div>
<div style="left:1629px;top:571px;width:239px;height:7px;background:#4f4f4f"></div>
<svg style="position:absolute;left:0px;top:0px;" width="1" height="1" viewBox="0 0 1 1"><rect x="1738" y="573" width="1" height="4" fill="#2e2e2e"/><rect x="1740" y="573" width="1" height="4" fill="#2e2e2e"/><rect x="1742" y="573" width="1" height="4" fill="#2e2e2e"/><rect x="1744" y="573" width="1" height="4" fill="#2e2e2e"/><rect x="1746" y="573" width="1" height="4" fill="#2e2e2e"/><rect x="1748" y="573" width="1" height="4" fill="#2e2e2e"/><rect x="1750" y="573" width="1" height="4" fill="#2e2e2e"/><rect x="1752" y="573" width="1" height="4" fill="#2e2e2e"/><rect x="1754" y="573" width="1" height="4" fill="#2e2e2e"/><rect x="1756" y="573" width="1" height="4" fill="#2e2e2e"/></svg>
<div style="left:1870px;top:57px;width:12px;height:13px;background:#444"></div>
<div style="left:1870px;top:166px;width:12px;height:2px;background:#3a3a3a"></div>
<div style="left:1870px;top:291px;width:12px;height:2px;background:#3a3a3a"></div>
<div style="left:1870px;top:360px;width:12px;height:2px;background:#3a3a3a"></div>
<div style="left:1870px;top:401px;width:12px;height:2px;background:#3a3a3a"></div>
<div style="left:1870px;top:442px;width:12px;height:2px;background:#3a3a3a"></div>
<svg style="position:absolute;left:0px;top:0px;" width="1" height="1" viewBox="0 0 1 1"><rect x="1879" y="74" width="1" height="4" fill="#2e2e2e"/><rect x="1881" y="74" width="1" height="4" fill="#2e2e2e"/><rect x="1879" y="171" width="1" height="4" fill="#2e2e2e"/><rect x="1881" y="171" width="1" height="4" fill="#2e2e2e"/><rect x="1879" y="296" width="1" height="4" fill="#2e2e2e"/><rect x="1881" y="296" width="1" height="4" fill="#2e2e2e"/><rect x="1879" y="365" width="1" height="4" fill="#2e2e2e"/><rect x="1881" y="365" width="1" height="4" fill="#2e2e2e"/><rect x="1879" y="406" width="1" height="4" fill="#2e2e2e"/><rect x="1881" y="406" width="1" height="4" fill="#2e2e2e"/><rect x="1880" y="90" width="2" height="10" fill="#d0d0d0"/><rect x="1880" y="118" width="2" height="5" fill="#d0d0d0"/><rect x="1880" y="146" width="2" height="7" fill="#d0d0d0"/><rect x="1880" y="183" width="2" height="3" fill="#d0d0d0"/><rect x="1880" y="189" width="2" height="2" fill="#d0d0d0"/><rect x="1880" y="211" width="2" height="8" fill="#d0d0d0"/><rect x="1880" y="240" width="2" height="8" fill="#d0d0d0"/><rect x="1880" y="266" width="2" height="8" fill="#d0d0d0"/><rect x="1880" y="345" width="2" height="5" fill="#d0d0d0"/><rect x="1880" y="425" width="2" height="5" fill="#d0d0d0"/></svg>
<div style="left:1875px;top:374px;width:10px;height:21px;background:#2f2f2f;border-radius:3px"></div>
<div style="left:1880px;top:382px;width:2px;height:5px;background:#d8d8d8"></div>
</body></html>
